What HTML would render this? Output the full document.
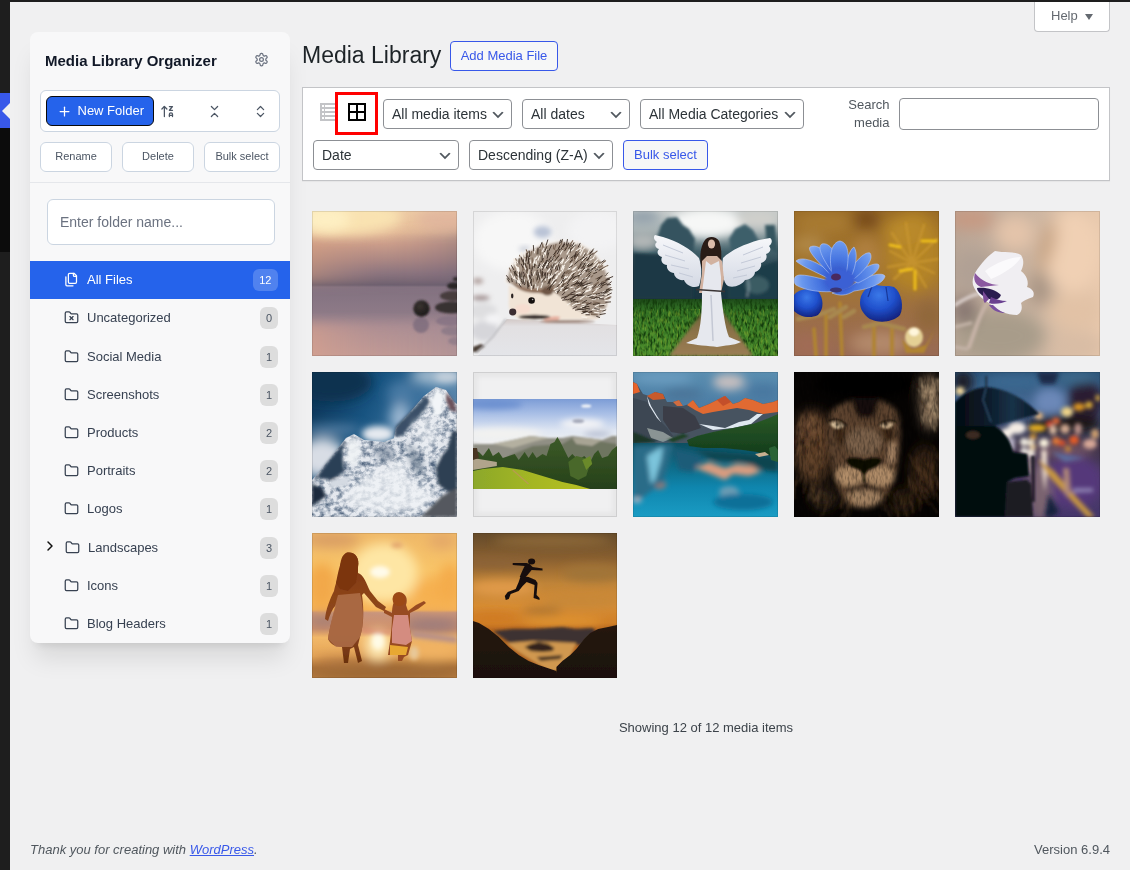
<!DOCTYPE html>
<html lang="en">
<head>
<meta charset="utf-8">
<title>Media Library</title>
<style>
*{box-sizing:border-box;margin:0;padding:0}
html,body{width:1130px;height:870px;overflow:hidden}
body{background:#f0f0f1;font-family:"Liberation Sans",Arial,sans-serif;font-size:13px;line-height:1.4;color:#3c434a;position:relative}
#page{position:absolute;left:0;top:0;width:1130px;height:870px;overflow:hidden;will-change:transform}
#adminbar{position:absolute;left:0;top:0;width:1130px;height:2px;background:#1e1e1e}
#menu{position:absolute;left:0;top:0;width:10px;height:870px;background:#1e1e1e}
#menu .cur{position:absolute;left:0;top:93px;width:10px;height:35px;background:#3858e9}
#menu .cur:after{content:"";position:absolute;right:0;top:50%;margin-top:-8px;border:8px solid transparent;border-right-color:#f0f0f1;border-left-width:0}
#menu .sub{position:absolute;left:0;top:128px;width:10px;height:124px;background:#0c0c0c}
#edgeL{position:absolute;left:10px;top:2px;width:1px;height:868px;background:#fbfbfb}
#edgeT{position:absolute;left:10px;top:2px;width:1120px;height:1px;background:#fbfbfb}

/* sidebar panel */
#panel{position:absolute;left:30px;top:32px;width:260px;height:611px;background:#f8f8f9;border-radius:8px;box-shadow:0 20px 25px -5px rgba(0,0,0,.1),0 8px 10px -6px rgba(0,0,0,.1)}
#panel h2{position:absolute;left:15px;top:19px;font-size:15px;font-weight:700;line-height:20px;color:#111827;white-space:nowrap}
#gear{position:absolute;left:224px;top:20px;width:15px;height:15px;color:#6b7280}
#tools{position:absolute;left:10px;top:58px;width:240px;height:42px;background:#fff;border:1px solid #cbd5e1;border-radius:6px}
#newf{position:absolute;left:5px;top:5px;width:108px;height:30px;background:#2563eb;border:1px solid #0a0a0a;border-radius:6px;color:#fff;font-size:13px;line-height:28px;white-space:nowrap}
#newf svg{position:absolute;left:9.9px;top:7px;width:15px;height:15px}
#newf span{position:absolute;left:30.5px;top:0}
.tb{position:absolute;top:13px;width:15px;height:15px;color:#4b5563}
.sb{position:absolute;top:110px;height:30px;background:#fff;border:1px solid #cbd5e1;border-radius:6px;font-size:11px;line-height:26px;text-align:center;color:#4b5563;white-space:nowrap}
#sep{position:absolute;left:0;top:150px;width:260px;height:1px;background:#e5e7eb}
#fname{position:absolute;left:17px;top:167px;width:228px;height:46px;background:#fff;border:1px solid #cbd5e1;border-radius:6px;font-size:14px;line-height:44px;padding-left:12px;color:#6b7280;white-space:nowrap}
.row{position:absolute;left:0;width:260px;height:38px;font-size:13px;color:#374151;white-space:nowrap}
.row.on{background:#2563eb;color:#fff}
.row svg.ic{position:absolute;left:33.5px;top:10.5px;width:15px;height:15px;color:#374151}
.row.on svg.ic{color:#fff}
.row .lb{position:absolute;left:57px;top:0;line-height:38px}
.row .bd{position:absolute;right:12px;top:8px;height:22px;min-width:18px;padding:0 6px;border-radius:6px;background:#dddddd;color:#4b5563;font-size:11px;line-height:22px;text-align:center}
.row.on .bd{background:rgba(255,255,255,.2);color:#fff;padding:0 6.500px}
.row svg.ch{position:absolute;left:11.5px;top:9.4px;width:16px;height:16px;color:#111}

/* main */
h1{position:absolute;left:302px;top:40px;font-size:23px;font-weight:400;line-height:30px;color:#1d2327;white-space:nowrap}
.btn{position:absolute;height:30px;border:1px solid #3858e9;border-radius:4px;background:#f6f7f7;color:#3858e9;font-size:13px;line-height:28px;text-align:center;white-space:nowrap}
#help{position:absolute;left:1034px;top:2px;width:76px;height:30px;background:#fff;border:1px solid #c3c4c7;border-top:none;border-radius:0 0 4px 4px;color:#646970;font-size:13px;line-height:26px;white-space:nowrap}
#help span{position:absolute;left:16px;top:1px}
#help i{position:absolute;left:50px;top:12px;width:0;height:0;border-left:4px solid transparent;border-right:4px solid transparent;border-top:6px solid #646970}
#filters{position:absolute;left:302px;top:87px;width:808px;height:94px;background:#fff;border:1px solid #c3c4c7;box-shadow:0 1px 1px rgba(0,0,0,.04)}
.sel{position:absolute;height:30px;border:1px solid #8c8f94;border-radius:4px;background:#fff;color:#2c3338;font-size:14px;line-height:28px;padding-left:8px;white-space:nowrap}
.sel svg{position:absolute;right:5px;top:7px;width:16px;height:16px}
#slabel{position:absolute;left:820.500px;top:96px;width:69px;text-align:right;font-size:13px;line-height:18.2px;color:#50575e}
#sinput{position:absolute;left:899px;top:98px;width:200px;height:32px;border:1px solid #8c8f94;border-radius:4px;background:#fff}
#vlist{position:absolute;left:320px;top:103px;width:18px;height:18px}
#vgrid{position:absolute;left:335px;top:92px;width:43px;height:43px;border:3px solid #f00}
#vgrid svg{position:absolute;left:10px;top:8px;width:18px;height:18px}
.th{position:absolute;width:145px;height:145px;background:#f0f0f1;outline:0}
.th svg{position:absolute;left:0;top:0;width:100%;height:145px;display:block;overflow:hidden}
.th:after{content:"";position:absolute;inset:0;box-shadow:inset 0 0 0 1px rgba(0,0,0,.1)}
#count{position:absolute;left:302px;top:719px;width:808px;text-align:center;font-size:13px;line-height:18px;color:#3c434a}
#ft1{position:absolute;left:30px;top:841px;font-size:13px;font-style:italic;line-height:18px;color:#50575e;white-space:nowrap}
#ft1 u{color:#3858e9}
#ft2{position:absolute;right:20px;top:841px;font-size:13px;line-height:18px;color:#50575e;white-space:nowrap}
</style>
</head>
<body>
<div id="page">
<div id="adminbar"></div>
<div id="menu"><div class="cur"></div><div class="sub"></div></div>

<div id="panel">
  <h2>Media Library Organizer</h2>
  <svg id="gear" viewBox="0 0 24 24" fill="none" stroke="currentColor" stroke-width="2" stroke-linecap="round" stroke-linejoin="round"><path d="M12.22 2h-.44a2 2 0 0 0-2 2v.18a2 2 0 0 1-1 1.73l-.43.25a2 2 0 0 1-2 0l-.15-.08a2 2 0 0 0-2.73.73l-.22.38a2 2 0 0 0 .73 2.73l.15.1a2 2 0 0 1 1 1.72v.51a2 2 0 0 1-1 1.74l-.15.09a2 2 0 0 0-.73 2.73l.22.38a2 2 0 0 0 2.73.73l.15-.08a2 2 0 0 1 2 0l.43.25a2 2 0 0 1 1 1.73V20a2 2 0 0 0 2 2h.44a2 2 0 0 0 2-2v-.18a2 2 0 0 1 1-1.73l.43-.25a2 2 0 0 1 2 0l.15.08a2 2 0 0 0 2.73-.73l.22-.39a2 2 0 0 0-.73-2.73l-.15-.08a2 2 0 0 1-1-1.74v-.5a2 2 0 0 1 1-1.74l.15-.09a2 2 0 0 0 .73-2.73l-.22-.38a2 2 0 0 0-2.73-.73l-.15.08a2 2 0 0 1-2 0l-.43-.25a2 2 0 0 1-1-1.73V4a2 2 0 0 0-2-2z"/><circle cx="12" cy="12" r="3"/></svg>
  <div id="tools">
    <div id="newf"><svg viewBox="0 0 24 24" fill="none" stroke="#fff" stroke-width="2" stroke-linecap="round" stroke-linejoin="round"><path d="M5 12h14"/><path d="M12 5v14"/></svg><span>New Folder</span></div>
    <svg class="tb" style="left:119px" viewBox="0 0 24 24" fill="none" stroke="currentColor" stroke-width="2" stroke-linecap="round" stroke-linejoin="round"><path d="m3 8 4-4 4 4"/><path d="M7 4v16"/><path d="M15 4h5l-5 6h5"/><path d="M15 20v-3.500a2.500 2.500 0 0 1 5 0V20"/><path d="M20 18h-5"/></svg>
    <svg class="tb" style="left:165.500px" viewBox="0 0 24 24" fill="none" stroke="currentColor" stroke-width="2" stroke-linecap="round" stroke-linejoin="round"><path d="m7 20 5-5 5 5"/><path d="m7 4 5 5 5-5"/></svg>
    <svg class="tb" style="left:211.500px" viewBox="0 0 24 24" fill="none" stroke="currentColor" stroke-width="2" stroke-linecap="round" stroke-linejoin="round"><path d="m7 15 5 5 5-5"/><path d="m7 9 5-5 5 5"/></svg>
  </div>
  <div class="sb" style="left:10px;width:72px">Rename</div>
  <div class="sb" style="left:92px;width:72px">Delete</div>
  <div class="sb" style="left:174px;width:76px">Bulk select</div>
  <div id="sep"></div>
  <div id="fname">Enter folder name...</div>
  <div class="row on" style="top:229px"><svg class="ic" viewBox="0 0 24 24" fill="none" stroke="currentColor" stroke-width="2" stroke-linecap="round" stroke-linejoin="round"><path d="M20 7h-3a2 2 0 0 1-2-2V2"/><path d="M9 18a2 2 0 0 1-2-2V4a2 2 0 0 1 2-2h7l4 4v10a2 2 0 0 1-2 2Z"/><path d="M3 7.600v12.800A1.600 1.600 0 0 0 4.600 22h9.800"/></svg><span class="lb">All Files</span><span class="bd">12</span></div>
  <div class="row" style="top:267px"><svg class="ic" viewBox="0 0 24 24" fill="none" stroke="currentColor" stroke-width="2" stroke-linecap="round" stroke-linejoin="round"><path d="M4 20h16a2 2 0 0 0 2-2V8a2 2 0 0 0-2-2h-7.930a2 2 0 0 1-1.660-.900l-.820-1.200A2 2 0 0 0 7.930 3H4a2 2 0 0 0-2 2v13c0 1.100.900 2 2 2Z"/><path d="m9.500 10.500 5 5"/><path d="m14.500 10.500-5 5"/></svg><span class="lb">Uncategorized</span><span class="bd">0</span></div>
  <div class="row" style="top:306px"><svg class="ic" viewBox="0 0 24 24" fill="none" stroke="currentColor" stroke-width="2" stroke-linecap="round" stroke-linejoin="round"><path d="M20 20a2 2 0 0 0 2-2V8a2 2 0 0 0-2-2h-7.900a2 2 0 0 1-1.690-.900L9.600 3.900A2 2 0 0 0 7.930 3H4a2 2 0 0 0-2 2v13a2 2 0 0 0 2 2Z"/></svg><span class="lb">Social Media</span><span class="bd">1</span></div>
  <div class="row" style="top:344px"><svg class="ic" viewBox="0 0 24 24" fill="none" stroke="currentColor" stroke-width="2" stroke-linecap="round" stroke-linejoin="round"><path d="M20 20a2 2 0 0 0 2-2V8a2 2 0 0 0-2-2h-7.900a2 2 0 0 1-1.690-.900L9.600 3.900A2 2 0 0 0 7.930 3H4a2 2 0 0 0-2 2v13a2 2 0 0 0 2 2Z"/></svg><span class="lb">Screenshots</span><span class="bd">1</span></div>
  <div class="row" style="top:382px"><svg class="ic" viewBox="0 0 24 24" fill="none" stroke="currentColor" stroke-width="2" stroke-linecap="round" stroke-linejoin="round"><path d="M20 20a2 2 0 0 0 2-2V8a2 2 0 0 0-2-2h-7.900a2 2 0 0 1-1.690-.900L9.600 3.900A2 2 0 0 0 7.930 3H4a2 2 0 0 0-2 2v13a2 2 0 0 0 2 2Z"/></svg><span class="lb">Products</span><span class="bd">2</span></div>
  <div class="row" style="top:420px"><svg class="ic" viewBox="0 0 24 24" fill="none" stroke="currentColor" stroke-width="2" stroke-linecap="round" stroke-linejoin="round"><path d="M20 20a2 2 0 0 0 2-2V8a2 2 0 0 0-2-2h-7.900a2 2 0 0 1-1.690-.900L9.600 3.900A2 2 0 0 0 7.930 3H4a2 2 0 0 0-2 2v13a2 2 0 0 0 2 2Z"/></svg><span class="lb">Portraits</span><span class="bd">2</span></div>
  <div class="row" style="top:458px"><svg class="ic" viewBox="0 0 24 24" fill="none" stroke="currentColor" stroke-width="2" stroke-linecap="round" stroke-linejoin="round"><path d="M20 20a2 2 0 0 0 2-2V8a2 2 0 0 0-2-2h-7.900a2 2 0 0 1-1.690-.900L9.600 3.900A2 2 0 0 0 7.930 3H4a2 2 0 0 0-2 2v13a2 2 0 0 0 2 2Z"/></svg><span class="lb">Logos</span><span class="bd">1</span></div>
  <div class="row" style="top:497px"><svg class="ch" viewBox="0 0 24 24" fill="none" stroke="currentColor" stroke-width="2.2" stroke-linecap="round" stroke-linejoin="round"><path d="m9 18 6-6-6-6"/></svg><svg class="ic" style="left:34.5px" viewBox="0 0 24 24" fill="none" stroke="currentColor" stroke-width="2" stroke-linecap="round" stroke-linejoin="round"><path d="M20 20a2 2 0 0 0 2-2V8a2 2 0 0 0-2-2h-7.900a2 2 0 0 1-1.690-.900L9.600 3.900A2 2 0 0 0 7.930 3H4a2 2 0 0 0-2 2v13a2 2 0 0 0 2 2Z"/></svg><span class="lb" style="left:58px">Landscapes</span><span class="bd">3</span></div>
  <div class="row" style="top:535px"><svg class="ic" viewBox="0 0 24 24" fill="none" stroke="currentColor" stroke-width="2" stroke-linecap="round" stroke-linejoin="round"><path d="M20 20a2 2 0 0 0 2-2V8a2 2 0 0 0-2-2h-7.900a2 2 0 0 1-1.690-.900L9.600 3.900A2 2 0 0 0 7.930 3H4a2 2 0 0 0-2 2v13a2 2 0 0 0 2 2Z"/></svg><span class="lb">Icons</span><span class="bd">1</span></div>
  <div class="row" style="top:573px"><svg class="ic" viewBox="0 0 24 24" fill="none" stroke="currentColor" stroke-width="2" stroke-linecap="round" stroke-linejoin="round"><path d="M20 20a2 2 0 0 0 2-2V8a2 2 0 0 0-2-2h-7.900a2 2 0 0 1-1.690-.900L9.600 3.900A2 2 0 0 0 7.930 3H4a2 2 0 0 0-2 2v13a2 2 0 0 0 2 2Z"/></svg><span class="lb">Blog Headers</span><span class="bd">1</span></div>
</div>

<h1>Media Library</h1>
<div class="btn" style="left:450px;top:41px;width:108px">Add Media File</div>
<div id="help"><span>Help</span><i></i></div>

<div id="filters"></div>
<svg id="vlist" viewBox="0 0 18 18"><rect width="18" height="18" fill="#c3c4c7"/><g fill="#fff"><rect x="2" y="2" width="2" height="2"/><rect x="5" y="2" width="11" height="2"/><rect x="2" y="6" width="2" height="2"/><rect x="5" y="6" width="11" height="2"/><rect x="2" y="10" width="2" height="2"/><rect x="5" y="10" width="11" height="2"/><rect x="2" y="14" width="2" height="2"/><rect x="5" y="14" width="11" height="2"/></g></svg>
<div id="vgrid"><svg viewBox="0 0 18 18" fill="none" stroke="#000" stroke-width="2"><rect x="1" y="1" width="16" height="16"/><path d="M9 1v16M1 9h16"/></svg></div>
<div class="sel" style="left:383px;top:99px;width:129px">All media items<svg viewBox="0 0 20 20"><path d="M5 6l5 5 5-5 2 1-7 7-7-7 2-1z" fill="#50575e"/></svg></div>
<div class="sel" style="left:522px;top:99px;width:108px">All dates<svg viewBox="0 0 20 20"><path d="M5 6l5 5 5-5 2 1-7 7-7-7 2-1z" fill="#50575e"/></svg></div>
<div class="sel" style="left:640px;top:99px;width:164px">All Media Categories<svg viewBox="0 0 20 20"><path d="M5 6l5 5 5-5 2 1-7 7-7-7 2-1z" fill="#50575e"/></svg></div>
<div id="slabel">Search media</div>
<div id="sinput"></div>
<div class="sel" style="left:313px;top:140px;width:146px">Date<svg viewBox="0 0 20 20"><path d="M5 6l5 5 5-5 2 1-7 7-7-7 2-1z" fill="#50575e"/></svg></div>
<div class="sel" style="left:469px;top:140px;width:144px">Descending (Z-A)<svg viewBox="0 0 20 20"><path d="M5 6l5 5 5-5 2 1-7 7-7-7 2-1z" fill="#50575e"/></svg></div>
<div class="btn" style="left:623px;top:140px;width:85px">Bulk select</div>

<div class="th" style="left:312px;top:211px;width:145px"><svg viewBox="0 0 145 145" preserveAspectRatio="none">
<defs>
<linearGradient id="st_a" x1="0" y1="0" x2="0" y2="1">
<stop offset="0" stop-color="#ecc9a4"/><stop offset=".15" stop-color="#e6bc98"/><stop offset=".23" stop-color="#cfa08a"/><stop offset=".34" stop-color="#a98682"/><stop offset=".43" stop-color="#84707c"/><stop offset=".51" stop-color="#695d6d"/><stop offset=".525" stop-color="#827180"/><stop offset=".7" stop-color="#8d7a87"/><stop offset=".8" stop-color="#a58a92"/><stop offset="1" stop-color="#bf9a96"/>
</linearGradient>
<linearGradient id="st_c" x1="0" y1="0" x2="1" y2="0"><stop offset="0" stop-color="#dda27c" stop-opacity=".6"/><stop offset=".5" stop-color="#b08888" stop-opacity=".15"/><stop offset="1" stop-color="#6a5e74" stop-opacity=".5"/></linearGradient>
<linearGradient id="st_d" x1="0" y1="0" x2="1" y2="0"><stop offset="0" stop-color="#e0a48c" stop-opacity=".75"/><stop offset=".45" stop-color="#c89c94" stop-opacity=".3"/><stop offset="1" stop-color="#9c8a98" stop-opacity=".5"/></linearGradient>
<filter id="st_f" x="-50%" y="-50%" width="200%" height="200%"><feGaussianBlur stdDeviation="1"/></filter>
<filter id="st_g" x="-50%" y="-50%" width="200%" height="200%"><feGaussianBlur stdDeviation="6"/></filter>
<radialGradient id="st_s" cx=".4" cy=".35" r=".7"><stop offset="0" stop-color="#3a3430"/><stop offset="1" stop-color="#181617"/></radialGradient>
</defs>
<rect width="145" height="145" fill="url(#st_a)"/>
<path d="M-20 30L165 18V72H-20Z" fill="url(#st_c)" filter="url(#st_g)"/>
<rect x="-20" y="112" width="185" height="50" fill="url(#st_d)" filter="url(#st_g)"/>
<ellipse cx="30" cy="6" rx="60" ry="18" fill="#fbe6b4" opacity=".9" filter="url(#st_g)"/>
<ellipse cx="14" cy="8" rx="24" ry="12" fill="#fff3c8" opacity=".8" filter="url(#st_g)"/>
<ellipse cx="135" cy="8" rx="30" ry="12" fill="#dcae9c" opacity=".6" filter="url(#st_g)"/>
<g filter="url(#st_f)">
<ellipse cx="109" cy="114" rx="8" ry="8" fill="#7c6c7c" opacity=".8"/>
<ellipse cx="138" cy="110" rx="14" ry="5" fill="#847282" opacity=".8"/>
<ellipse cx="141" cy="120" rx="12" ry="4.500" fill="#8a7886" opacity=".8"/>
<ellipse cx="144" cy="130" rx="8" ry="4" fill="#8d7a88" opacity=".8"/>
</g>
<g filter="url(#st_f)">
<ellipse cx="144" cy="68" rx="3" ry="2" fill="#2e2a2c"/>
<ellipse cx="142" cy="75" rx="7" ry="3.500" fill="#2a2628"/>
<ellipse cx="141" cy="85" rx="13" ry="5" fill="#463c3e"/>
<ellipse cx="139" cy="96.500" rx="16" ry="6" fill="#383032"/>
</g>
<circle cx="109.500" cy="97.500" r="8.200" fill="url(#st_s)" filter="url(#st_f)"/>
</svg></div>
<div class="th" style="left:473px;top:211px;width:144px"><svg viewBox="0 0 145 145" preserveAspectRatio="none">
<defs>
<filter id="hh_b" x="-50%" y="-50%" width="200%" height="200%"><feGaussianBlur stdDeviation="5"/></filter>
<filter id="hh_c" x="-50%" y="-50%" width="200%" height="200%"><feGaussianBlur stdDeviation="1.2"/></filter>
<filter id="hh_d" x="-50%" y="-50%" width="200%" height="200%"><feGaussianBlur stdDeviation="2.5"/></filter>
<filter id="hh_e" x="-50%" y="-50%" width="200%" height="200%"><feGaussianBlur stdDeviation=".35"/></filter>
<linearGradient id="hh_s" x1="0" y1="0" x2="0" y2="1"><stop offset="0" stop-color="#d2c8c6"/><stop offset=".2" stop-color="#e2e0e2"/><stop offset="1" stop-color="#e4e5e9"/></linearGradient>
</defs>
<rect width="145" height="145" fill="#eeeeef"/>
<ellipse cx="40" cy="30" rx="40" ry="30" fill="#f7f7f7" filter="url(#hh_b)"/>
<ellipse cx="70" cy="21" rx="9" ry="6" fill="#b9c3d6" filter="url(#hh_d)"/>
<ellipse cx="52" cy="38" rx="6" ry="3" fill="#cfd3dc" filter="url(#hh_d)"/>
<ellipse cx="125" cy="20" rx="30" ry="20" fill="#f3f3f4" filter="url(#hh_b)"/>
<g filter="url(#hh_d)">
<ellipse cx="10" cy="100" rx="14" ry="8" fill="#dedee0"/>
<ellipse cx="8" cy="87" rx="9" ry="2" fill="#8a7474"/>
<ellipse cx="5" cy="70" rx="5" ry="2.5" fill="#a08c88"/>
<ellipse cx="12" cy="120" rx="14" ry="10" fill="#d6d6da"/>
<ellipse cx="20" cy="108" rx="8" ry="5" fill="#f4f4f6"/>
</g>
<path d="M34 108L145 114V145H5L20 125Z" fill="url(#hh_s)"/>
<path d="M0 136L8 133L12 135L4 141L0 141Z" fill="#4a3c34" filter="url(#hh_c)"/>
<path d="M33 108L20 126L3 142" stroke="#b8b8bc" stroke-width="1.5" fill="none" filter="url(#hh_c)"/>
<path d="M34 70L37 60L44 50L54 42L68 35L88 31L106 33L120 41L130 53L136 67L137 82L134 96L126 106L112 108L102 100L92 92L84 84L74 78L60 80L44 76Z" fill="#f4f0ec" stroke="#f4f0ec" stroke-width="5" stroke-linejoin="round" filter="url(#hh_c)"/>
<path d="M34 70L37 60L44 50L54 42L68 35L88 31L106 33L120 41L130 53L136 67L137 82L134 96L126 106L112 108L102 100L92 92L84 84L74 78L60 80L44 76Z" fill="#a8988a" filter="url(#hh_c)"/>
<g filter="url(#hh_c)">
<path d="M36 74C44 78 58 80 72 78C82 80 92 88 100 96C110 102 120 104 128 108L50 109C40 106 35 100 36 90Z" fill="#f1e4d6"/>
<path d="M40 72C50 78 66 80 82 76C80 82 74 84 66 82C54 82 46 80 40 72Z" fill="#8a6a54"/>
<ellipse cx="75" cy="80" rx="6" ry="4.5" fill="#6e5444"/>
<ellipse cx="62" cy="106" rx="16" ry="2.2" fill="#2c2420"/>
<path d="M70 110C74 106 84 104 88 106C86 110 80 112 74 112Z" fill="#e6b0a0"/>
<ellipse cx="95" cy="110.5" rx="28" ry="1.5" fill="#a08a80"/>
<ellipse cx="50" cy="98" rx="8" ry="5" fill="#f6ddd0"/>
</g>
<g fill="none" stroke-linecap="round" filter="url(#hh_e)">
<path d="M85.0 82.3l2.9 -2.5M114.3 60.8l3.8 -1.7M120.0 48.5l3.0 -4.2M92.9 38.8l2.2 -5.2M130.7 56.9l5.1 -2.5M97.0 34.6l3.4 -4.9M103.2 44.3l3.1 -4.5M99.2 64.6l3.9 -3.1M120.0 80.6l3.6 -0.8M122.8 73.9l3.5 -2.2M82.0 38.4l1.6 -5.2M82.4 54.0l1.1 -4.7M100.2 71.4l4.4 -1.9M119.2 102.0l3.9 -0.6M74.5 77.2l3.1 -5.1M111.9 91.8l4.2 -0.0M102.6 74.7l3.5 -2.2M51.5 58.8l-1.5 -3.4M90.5 69.6l4.2 -2.2M133.1 87.3l5.8 -1.4M94.0 62.4l3.6 -2.8M134.8 88.2l3.1 -1.3M63.5 54.0l0.2 -5.8M122.0 74.1l4.2 -3.2M120.9 82.7l5.4 -0.4M83.1 46.1l0.5 -5.8M72.3 71.3l1.6 -3.5M88.8 40.4l1.8 -2.4M124.3 52.9l3.8 -1.9M52.9 72.6l-0.5 -3.4M56.1 74.3l-0.3 -3.0M58.2 44.4l0.7 -3.9M104.5 86.1l3.5 -2.3M120.8 78.1l4.3 -3.1M56.9 75.3l0.4 -4.0M105.8 90.2l4.4 -0.5M129.6 71.1l3.9 -1.7M62.9 54.6l-1.2 -5.6M128.8 53.2l4.7 -3.4M82.0 44.9l1.4 -5.6M69.0 66.7l0.3 -5.6M57.0 50.9l0.1 -3.6M102.4 92.2l4.4 -1.1M87.8 49.7l1.7 -2.8M48.9 48.9l-2.0 -4.7M44.9 69.6l-1.9 -3.6M90.3 79.2l4.5 -3.2M66.0 55.4l1.9 -5.2M92.4 62.5l3.6 -3.3M55.4 43.1l-1.8 -4.4M105.6 62.4l3.4 -2.5M89.7 67.6l2.3 -3.2M102.3 79.1l4.6 -3.6M64.1 70.2l-0.6 -3.6M119.1 93.0l4.2 -0.1M121.0 91.0l3.3 0.4M55.0 59.8l-0.8 -4.9M65.4 72.0l1.9 -3.1M99.0 64.6l3.7 -3.1M84.0 47.2l3.1 -3.9M116.6 68.2l4.0 -3.6M70.2 36.2l-0.6 -4.0M50.0 59.9l0.3 -4.8M106.3 66.2l2.0 -2.7M103.9 48.1l2.0 -2.8M57.7 62.5l-0.6 -5.4M101.4 79.1l3.5 -1.3M112.4 68.0l2.5 -3.4M74.3 51.4l1.3 -3.0M122.7 57.4l3.7 -2.4M77.6 78.6l3.8 -4.5M92.5 73.2l2.3 -2.6M60.0 51.4l-0.5 -4.5M92.2 37.8l2.9 -2.7M44.8 52.6l-1.8 -4.8M95.0 84.2l4.4 -1.9M102.0 49.3l2.4 -2.9M105.6 56.5l3.3 -3.0M67.7 44.1l-0.2 -5.5M105.4 93.4l5.4 -0.4M64.2 43.2l1.2 -5.1M98.5 38.3l2.1 -2.4M114.6 92.4l4.7 0.3M60.7 70.8l0.2 -3.1M113.9 73.5l5.4 -2.3M38.0 60.1l-1.4 -3.0M123.7 67.9l3.6 -1.7M101.9 46.5l3.4 -3.1M80.6 71.4l3.8 -2.7M54.0 66.9l-1.0 -4.2M64.1 76.5l0.2 -3.3M98.2 51.4l2.4 -5.1M121.1 43.1l3.8 -3.0M70.8 55.1l0.0 -4.8M56.3 43.6l0.4 -3.2M127.6 76.2l4.2 -2.0M125.3 57.7l5.1 -3.0M58.9 58.0l0.6 -3.5M110.1 100.5l4.7 -0.1M80.1 69.5l3.0 -3.0M83.2 60.6l2.0 -3.5M127.4 67.6l2.5 -2.3M134.4 78.7l4.7 -2.2M85.4 39.5l2.5 -5.3M81.0 37.7l0.2 -3.5M95.8 78.3l4.4 -1.9M71.6 37.6l-0.2 -4.9M76.3 57.0l2.6 -3.1M88.6 75.7l2.7 -5.3M70.6 53.5l-0.0 -4.8M119.2 103.4l5.9 0.4M88.7 75.5l4.1 -3.6M75.1 66.8l1.8 -4.4M116.5 101.6l3.2 -0.7M53.3 46.6l1.4 -5.7M103.5 77.7l5.6 -1.8M123.8 91.3l4.3 0.7M95.8 62.7l3.3 -2.3M88.8 33.4l1.2 -3.7M92.4 79.2l2.9 -1.8" stroke="#7c6858" stroke-width="1.1"/>
<path d="M79.8 73.9l3.5 -2.7M94.6 43.1l2.6 -4.2M101.9 78.5l2.2 -2.1M81.0 64.1l3.2 -3.3M110.5 38.7l2.4 -2.4M94.1 47.9l2.5 -3.3M111.1 101.8l5.1 0.6M125.0 75.0l3.9 -1.3M110.1 59.9l4.1 -2.4M96.1 67.4l3.0 -4.2M79.6 50.6l0.8 -4.2M84.3 53.9l3.9 -4.5M108.6 42.7l2.0 -3.5M87.2 78.4l3.6 -2.1M132.6 87.2l3.9 -2.0M130.1 58.9l4.9 -2.8M133.9 66.0l3.4 -1.3M124.1 56.6l2.6 -3.4M46.4 70.4l-1.0 -5.4M87.9 51.8l3.1 -3.8M87.7 75.0l2.6 -3.8M91.9 68.3l2.5 -2.0M65.4 57.1l0.8 -3.2M43.5 69.9l-2.0 -3.0M42.7 69.5l-1.1 -4.4M134.7 65.9l3.8 -1.1M86.7 63.3l1.9 -2.4M128.3 93.7l5.6 -0.0M67.6 66.4l-0.4 -4.0M100.2 94.4l4.2 -2.4M47.6 66.7l-2.2 -3.9M77.2 67.2l2.7 -2.6M116.3 79.2l3.3 -1.8M92.1 67.8l3.0 -2.5M102.8 34.7l2.2 -4.7M72.6 44.0l1.5 -5.2M86.7 72.6l4.2 -4.2M112.0 81.2l3.1 -2.0M73.4 55.7l3.0 -4.0M100.4 71.0l4.7 -2.7M115.4 42.7l1.9 -3.9M65.4 49.3l1.7 -4.2M123.1 95.4l3.5 -1.6M40.7 67.4l-2.6 -5.2M64.3 53.5l-0.7 -3.9M121.3 81.6l3.2 -2.6M89.4 52.5l1.8 -3.8M74.8 34.0l2.2 -3.7M101.6 36.7l2.1 -4.0M90.3 56.9l1.9 -2.8M108.7 96.5l5.5 -2.0M95.1 93.9l3.0 -2.0M45.7 59.7l-0.8 -3.4M103.8 39.9l3.9 -2.8M122.2 98.1l4.3 -0.7M109.8 101.8l4.8 0.6M63.5 76.7l-0.3 -3.4M85.3 60.5l1.2 -4.9M112.1 74.5l3.2 -0.7M109.8 53.7l4.9 -2.6M108.2 44.1l1.7 -3.3M117.0 58.5l4.8 -2.9M100.4 35.4l3.4 -2.7M105.3 70.7l3.4 -1.0M55.9 64.1l0.7 -5.3M56.0 68.1l-1.2 -4.6M46.1 53.5l-2.1 -3.4M106.4 98.9l5.7 -0.2M52.4 45.6l-0.5 -3.9M69.7 40.6l1.9 -3.6M40.2 56.0l-1.4 -3.2M81.6 78.5l3.6 -2.0M89.8 60.3l1.9 -4.0M66.7 56.4l1.7 -3.5M125.3 99.3l3.5 -1.4M117.6 60.2l3.3 -1.7M108.5 37.7l1.3 -3.6M122.3 51.3l3.5 -3.4M128.2 53.4l2.1 -2.8M99.8 59.0l2.7 -2.4M127.6 98.2l4.5 0.0M125.7 86.4l4.9 -2.3M51.6 50.9l-0.1 -3.2M126.4 87.7l4.5 -2.2M97.1 57.3l2.8 -5.3M99.4 62.8l3.6 -2.2M60.9 64.2l1.5 -3.6M81.6 57.7l1.7 -3.6M101.5 85.5l3.2 -0.2M53.0 58.3l-1.5 -3.9M120.0 88.2l3.5 -0.3M83.8 81.6l5.3 -2.5M77.2 67.1l1.6 -4.0M95.8 58.2l2.5 -4.1M121.5 54.9l3.9 -3.9M100.6 32.7l2.1 -2.4M132.8 89.7l3.0 -0.4M77.5 59.0l2.9 -5.0M105.9 59.8l2.8 -1.7M68.5 76.5l1.5 -3.9M51.9 71.9l-0.4 -3.3M131.6 84.5l5.5 -2.0M110.0 49.7l1.7 -2.5M57.9 52.0l-0.6 -3.3M124.0 78.0l4.9 -1.8M116.6 47.1l2.9 -3.0M88.0 43.1l1.9 -3.6M75.9 67.8l0.7 -4.4M131.8 98.4l3.0 0.7M121.3 84.5l4.5 -1.3M74.8 55.5l0.7 -3.0M58.8 76.0l0.2 -4.0M50.3 47.0l-1.1 -3.8M104.2 92.8l3.2 -0.7M43.5 71.2l-1.8 -4.4M92.5 52.1l4.2 -4.2M111.0 45.4l1.4 -3.4M58.7 78.7l-0.3 -4.4M61.8 42.0l0.8 -3.6M93.2 79.8l2.6 -1.9M83.0 80.6l3.5 -1.6M117.8 48.9l4.0 -2.0M83.9 67.5l2.5 -4.9M63.4 48.0l1.2 -2.8M46.5 73.2l-2.5 -4.5M106.4 63.9l2.5 -3.5M111.9 61.0l4.3 -2.7M43.2 52.9l-2.6 -5.0M75.1 60.7l2.3 -3.0M107.9 64.8l3.1 -3.0M64.7 79.2l0.8 -3.8M109.6 105.9l5.0 0.7M122.1 60.1l4.4 -2.6M112.1 75.5l4.0 -3.1M92.4 71.3l2.5 -2.4M128.3 82.4l4.9 -2.3M69.4 72.1l0.0 -4.1M120.1 98.5l4.9 -1.5M98.2 40.3l3.1 -2.5M130.7 83.5l3.6 -2.0M70.1 46.8l1.1 -2.9M106.7 42.5l2.4 -4.4M81.6 70.0l2.6 -5.0M72.9 69.3l1.7 -4.3M89.8 70.2l3.3 -4.5M46.3 59.9l-0.5 -3.3M133.3 63.7l4.6 -1.4M79.2 72.6l2.2 -4.2M103.7 79.5l4.3 -2.8M49.8 69.0l-1.2 -5.2M71.9 35.1l-0.7 -5.5M88.9 58.8l1.6 -4.4M44.5 59.4l-0.6 -4.1M61.3 52.0l1.3 -5.2M45.8 61.1l-0.8 -3.3M60.8 54.5l0.5 -3.5M100.1 33.4l2.4 -2.9M73.7 53.6l2.0 -3.9M81.7 52.7l2.4 -2.7M57.4 73.3l-0.5 -3.5M113.5 55.6l3.6 -3.6M101.3 58.7l2.6 -3.1M68.8 56.9l2.4 -4.8M113.5 46.5l3.5 -2.1M52.2 51.8l-0.6 -3.8M117.1 77.4l3.2 -3.0M113.4 81.0l4.9 -2.1M47.4 71.5l-1.7 -4.2M114.6 76.5l4.0 -1.4M48.1 47.0l0.6 -5.7M44.0 56.9l-2.2 -4.4M72.6 57.5l-0.1 -3.2M72.0 42.5l-0.2 -3.0M43.3 52.8l-1.7 -5.2M62.6 52.4l-0.6 -3.0M116.4 73.6l3.6 -1.9M121.9 101.3l5.0 0.6M97.8 77.1l3.0 -1.0M48.1 74.2l-2.8 -4.4M108.0 88.0l4.7 -3.4M121.2 46.7l2.7 -3.5M114.4 69.8l3.5 -3.0M110.4 68.0l5.7 -1.9M104.3 82.5l3.9 -1.2M109.6 93.8l3.5 -0.8M56.9 46.6l-0.9 -4.2M130.4 83.5l4.6 -3.2M97.3 57.8l1.9 -5.1M114.7 85.5l5.4 -1.4M103.6 49.3l1.9 -3.4" stroke="#f6f0e8" stroke-width="1.1"/>
<path d="M107.9 53.9l2.2 -3.2M73.7 34.0l1.6 -5.1M117.7 42.6l3.2 -3.0M53.4 50.1l1.3 -5.2M100.6 36.2l2.9 -2.3M115.0 55.0l2.1 -2.4M135.5 67.7l5.2 -2.1M127.0 77.5l3.0 -1.4M107.5 49.1l3.9 -2.7M97.6 51.0l2.9 -2.1M59.6 64.5l-0.9 -3.4M102.3 84.7l3.2 -1.2M129.6 82.1l5.4 -1.9M126.8 59.5l3.4 -1.9M123.4 86.3l3.8 0.2M107.9 74.8l4.2 -3.3M44.9 65.3l-3.4 -4.3M135.4 84.1l4.0 -2.0M114.5 68.0l3.4 -4.2M118.0 42.2l3.3 -4.3M134.0 68.4l3.2 -0.4M78.0 58.8l1.6 -4.3M121.5 62.6l3.1 -1.2M90.7 70.2l2.5 -2.4M74.6 44.0l0.2 -4.5M126.8 85.0l5.3 -0.4M98.6 47.0l4.0 -3.0M100.6 85.5l5.8 -1.3M97.7 88.6l3.6 -2.2M76.3 71.2l2.2 -3.4M102.1 74.0l3.8 -3.5M113.0 60.0l4.8 -2.0M96.4 37.4l2.5 -3.6M43.7 64.3l-1.0 -4.3M92.1 76.5l4.4 -2.9M130.7 100.1l3.0 -1.2M76.8 79.1l1.7 -4.3M90.6 79.8l3.3 -3.0M98.6 91.0l3.7 -2.1M119.1 58.3l5.1 -3.0M90.3 89.2l4.2 -0.6M61.1 39.7l-0.3 -5.2M57.3 57.7l-0.4 -4.1M111.1 101.7l4.6 -1.6M89.1 87.1l5.4 -2.0M76.3 40.0l2.6 -5.4M76.7 51.9l2.0 -2.5M53.9 47.3l0.4 -4.8M50.3 51.0l-1.9 -4.9M82.7 49.4l3.7 -4.4M102.3 47.5l1.4 -4.2M117.6 86.5l3.4 -0.7M108.7 57.5l2.7 -1.9M117.9 45.0l3.0 -2.5M91.9 87.4l4.6 -3.0M95.2 35.4l1.0 -3.3M101.2 90.9l4.1 -0.3M102.6 77.9l2.6 -3.0M69.7 66.0l0.2 -5.9M129.4 72.6l4.4 -1.7M119.9 77.3l4.3 -3.4M50.4 72.9l-1.6 -2.7M102.4 53.2l3.9 -3.5M59.0 74.6l-0.4 -4.9M56.3 53.1l-0.4 -3.7M103.2 99.1l5.3 -0.9M43.6 72.1l-0.3 -3.0M73.7 57.2l1.2 -2.9M133.2 64.5l2.6 -2.6M55.2 52.7l1.2 -4.9M88.4 31.7l1.7 -3.4M85.0 42.8l2.2 -4.4M108.6 75.0l3.4 -0.9M77.8 64.2l1.6 -5.2M129.8 74.6l5.0 -1.9M75.2 57.9l0.9 -5.8M73.2 52.4l0.7 -3.1M110.7 46.8l2.5 -3.9M70.0 55.6l2.7 -4.0M53.7 56.5l-1.4 -4.4M106.0 57.8l1.8 -2.4M58.9 60.2l1.6 -4.9M109.6 102.4l3.7 -1.4M87.1 32.5l1.1 -3.5M76.6 72.6l1.4 -4.9M109.8 82.6l2.9 -2.2M108.4 61.2l4.0 -3.9M62.1 56.3l-0.4 -3.1M99.3 74.4l5.4 -2.3M99.6 35.4l2.0 -3.7M72.2 54.9l1.1 -3.7M74.3 67.0l0.9 -4.9M107.2 73.4l2.8 -1.2M84.5 76.0l2.7 -2.9M128.1 74.4l4.2 -2.7M133.7 91.3l4.8 -0.4M75.7 50.6l3.0 -4.8M106.5 84.3l5.5 -0.3M98.4 68.2l3.2 -2.6M112.4 71.8l2.8 -2.5M49.6 70.1l-1.5 -2.8M42.4 65.0l-0.8 -4.4M106.3 72.8l3.2 -1.2M57.7 68.0l-1.1 -3.8M92.3 39.8l2.1 -3.2M83.0 58.0l1.0 -3.0M125.4 67.7l4.6 -2.9M121.7 87.4l2.7 -1.4M68.9 50.9l1.9 -3.5M90.1 83.8l2.3 -2.4M68.5 63.3l-0.4 -4.5M54.2 61.5l0.2 -3.5M65.4 43.0l0.1 -6.0M105.9 65.2l3.6 -2.3M55.3 77.3l-0.2 -4.5M46.7 66.4l0.3 -5.2M121.2 93.4l5.9 -0.9M114.8 73.0l5.3 -1.2M60.6 77.5l0.8 -3.4M111.0 57.5l2.8 -3.2M55.9 75.5l-1.3 -5.5M124.0 83.5l5.5 -1.9M111.8 77.3l2.8 -1.5M95.0 72.8l3.2 -4.7M70.0 58.7l2.0 -4.6M110.4 91.6l3.9 -2.1M124.6 105.5l2.9 0.9M88.9 71.8l2.5 -4.7M85.8 38.2l1.5 -3.1M86.3 52.1l2.4 -2.9M79.7 73.8l3.1 -4.6M74.7 78.2l4.3 -4.0M100.7 97.5l3.8 -1.9M73.4 52.5l1.7 -3.4M36.8 71.3l-2.2 -3.6M40.9 58.5l-2.1 -3.9M64.7 68.8l1.0 -5.2M71.6 64.7l1.0 -3.2M103.3 72.9l2.2 -2.6M134.9 73.9l3.6 -0.3M48.3 76.0l-2.1 -3.5M55.7 49.4l0.6 -4.7M80.1 67.9l1.9 -4.9M114.1 94.1l4.8 -2.4M115.3 49.3l2.8 -5.1M133.8 69.5l3.8 -1.5M133.5 81.9l4.8 -3.1M105.4 98.1l4.6 0.3M39.5 70.6l-0.6 -3.0M80.0 47.2l2.1 -2.8M57.9 67.3l0.8 -3.9M56.9 45.9l-0.5 -6.0M116.1 55.7l3.7 -1.9M95.3 88.8l5.0 -2.1M84.9 59.2l1.3 -5.6M127.1 87.6l4.3 0.4M50.3 56.5l-1.8 -3.5M113.7 103.8l3.5 -0.0M81.2 43.6l3.7 -4.6M113.9 60.8l2.0 -2.9M84.9 81.5l2.7 -2.3M64.9 57.2l1.9 -4.3M89.4 65.7l3.1 -4.8M86.6 59.1l1.0 -4.4M132.6 80.8l4.1 -2.8M100.3 68.3l2.9 -2.9M115.3 84.9l3.8 -1.2M134.7 78.8l5.3 0.0M88.9 66.8l2.9 -2.4M93.9 47.8l1.4 -2.9M69.1 71.2l2.9 -3.9M74.7 47.3l1.6 -5.7M57.6 72.4l1.5 -4.3M101.2 85.9l3.9 -1.8M80.1 66.8l3.1 -3.0M116.4 60.9l4.5 -2.6M114.3 49.3l2.8 -2.3M106.1 84.6l4.1 -0.6M46.3 53.5l0.2 -5.8M111.3 49.7l3.5 -3.7M92.7 78.0l3.5 -1.1M89.8 75.8l1.7 -2.7M65.5 66.3l0.2 -4.7M69.6 48.4l0.2 -3.8M98.5 82.1l4.2 -1.6M116.7 101.2l3.0 -0.7M105.2 84.7l4.3 -0.9M49.1 66.0l0.2 -5.0M102.2 45.6l1.8 -5.0M135.4 73.8l3.9 -3.0M119.6 87.4l3.2 -0.3M48.0 66.8l0.2 -4.0M50.4 68.6l0.4 -3.7M130.9 83.3l3.0 -2.0M36.5 68.3l-2.7 -3.7M98.2 89.2l5.1 -0.9M72.7 66.9l0.3 -4.8M51.9 73.7l-0.9 -2.9M109.5 98.2l4.2 0.8M97.8 41.3l1.0 -4.1M110.4 74.9l5.5 -2.2M105.2 72.9l3.9 -1.3M88.5 38.5l2.7 -4.8M99.6 66.4l2.1 -3.9M96.2 69.8l2.4 -2.1M96.8 83.9l5.3 -0.7M76.6 77.4l3.1 -3.0M104.3 45.5l2.8 -3.9M101.7 66.5l4.9 -2.2M84.6 80.8l2.8 -3.0M122.8 59.7l3.3 -1.8M118.3 54.7l2.1 -2.6M125.5 75.1l4.3 -3.4M91.3 36.0l0.7 -4.2M105.8 74.7l5.1 -1.9M64.1 64.0l0.6 -4.7M115.7 55.2l4.8 -2.4M90.2 35.6l2.1 -2.4M52.4 65.9l-1.6 -4.8M71.8 41.0l2.5 -5.4M113.2 95.1l3.6 0.5M115.4 63.8l3.5 -2.6M108.2 54.8l2.6 -2.3M50.8 53.9l0.2 -5.2M79.7 57.1l2.2 -4.9M125.2 69.8l2.7 -2.7M110.4 55.9l1.9 -2.6M75.4 72.8l2.0 -4.3M66.9 68.3l0.6 -3.8M69.6 64.4l0.9 -2.9M110.9 53.2l2.7 -1.4M110.7 100.1l3.8 0.5M67.2 36.6l2.3 -5.3M79.0 50.4l1.6 -2.9M96.7 56.7l3.4 -2.0M110.4 96.9l3.3 -1.6M122.5 97.6l4.7 0.6M110.5 96.5l3.1 0.3M104.9 73.0l2.0 -2.3M110.5 78.3l3.4 -2.1M65.8 56.8l2.0 -3.7M106.0 36.0l1.9 -3.7M51.5 71.5l-1.2 -2.8M128.5 51.9l3.7 -2.7M112.3 96.9l5.2 1.1M86.1 50.0l3.0 -2.8M127.8 103.6l5.4 -1.0M94.0 34.2l1.1 -5.7M108.9 71.2l3.3 -4.3M127.5 95.1l4.3 -0.6" stroke="#3a2c24" stroke-width="1" opacity=".9"/>
</g>
<circle cx="59" cy="89.5" r="3.3" fill="#14100f"/>
<circle cx="60" cy="88.5" r=".8" fill="#fff" opacity=".7"/>
<ellipse cx="39.5" cy="85" rx="1.2" ry="2.4" fill="#2a2220"/>
<ellipse cx="40" cy="101" rx="3.6" ry="3.4" fill="#3c2e32"/>
</svg></div>
<div class="th" style="left:633px;top:211px;width:145px"><svg viewBox="0 0 145 145" preserveAspectRatio="none">
<defs>
<filter id="an_b" x="-50%" y="-50%" width="200%" height="200%"><feGaussianBlur stdDeviation="5"/></filter>
<filter id="an_c" x="-50%" y="-50%" width="200%" height="200%"><feGaussianBlur stdDeviation="1.6"/></filter>
<filter id="an_d" x="-50%" y="-50%" width="200%" height="200%"><feGaussianBlur stdDeviation=".5"/></filter>
<filter id="an_n" color-interpolation-filters="sRGB" x="0" y="0" width="100%" height="100%"><feTurbulence type="fractalNoise" baseFrequency=".45 .18" numOctaves="2" seed="3"/><feColorMatrix type="matrix" values="0 0 0 0 .08  0 0 0 0 .24  0 0 0 0 .05  3 0 0 0 -1.25"/><feComposite in2="SourceGraphic" operator="in"/></filter>
<filter id="an_m" color-interpolation-filters="sRGB" x="0" y="0" width="100%" height="100%"><feTurbulence type="fractalNoise" baseFrequency=".5 .15" numOctaves="2" seed="9"/><feColorMatrix type="matrix" values="0 0 0 0 .55  0 0 0 0 .7  0 0 0 0 .2  0 3 0 0 -1.45"/><feComposite in2="SourceGraphic" operator="in"/></filter>
<linearGradient id="an_s" x1="0" y1="0" x2="0" y2="1"><stop offset="0" stop-color="#c4c9c9"/><stop offset=".22" stop-color="#a4b0b2"/><stop offset=".45" stop-color="#42606a"/><stop offset=".7" stop-color="#1e3a46"/><stop offset="1" stop-color="#1a3440"/></linearGradient>
<linearGradient id="an_g" x1="0" y1="0" x2="0" y2="1"><stop offset="0" stop-color="#1e4a1a"/><stop offset=".15" stop-color="#2e6a22"/><stop offset=".5" stop-color="#3e8028"/><stop offset="1" stop-color="#4a8c2c"/></linearGradient>
<linearGradient id="an_p" x1="0" y1="0" x2="0" y2="1"><stop offset="0" stop-color="#6a6038"/><stop offset=".5" stop-color="#8c7248"/><stop offset="1" stop-color="#9a7c54"/></linearGradient>
<linearGradient id="an_w" x1="0" y1="0" x2="0" y2="1"><stop offset="0" stop-color="#f6f7fa"/><stop offset="1" stop-color="#d4d9e4"/></linearGradient>
</defs>
<rect width="145" height="90" fill="url(#an_s)"/>
<g filter="url(#an_b)">
<ellipse cx="74" cy="12" rx="38" ry="15" fill="#f6f7f6"/>
<ellipse cx="125" cy="8" rx="22" ry="9" fill="#d0d0cc"/>
<ellipse cx="10" cy="30" rx="16" ry="9" fill="#b4b8b8"/>
<ellipse cx="10" cy="6" rx="16" ry="7" fill="#94a2ac"/>
</g>
<g filter="url(#an_c)">
<path d="M24 26L28 14L34 7L44 6L50 14L56 18L62 28L60 44L28 40Z" fill="#34525e"/>
<path d="M96 28L102 18L112 13L120 19L126 30L114 42L98 40Z" fill="#3e5e6a"/>
<path d="M132 14L142 14L145 42L134 38Z" fill="#34545e"/>
<path d="M0 42L40 44L60 60L60 88L0 88Z" fill="#1c3844"/>
<path d="M95 66L145 50L145 88L95 88Z" fill="#1e3c48"/>
<ellipse cx="124" cy="74" rx="12" ry="9" fill="#3a5c64"/>
<path d="M114 66L116 76L114 86" stroke="#b8c8d0" stroke-width=".8" fill="none"/>
</g>
<rect y="88" width="145" height="57" fill="url(#an_g)"/>
<rect y="88" width="145" height="57" fill="#000" filter="url(#an_n)"/>
<rect y="98" width="145" height="47" fill="#000" filter="url(#an_m)" opacity=".55"/>
<path d="M72 98L88 98L120 145L36 145Z" fill="url(#an_p)" filter="url(#an_c)"/>
<g filter="url(#an_d)">
<g fill="url(#an_w)">
<path d="M66 47C58 38 44 30 30 26L22 24C20 26 21 29 24 31C21 33 22 37 26 38C23 41 25 45 29 46C27 50 30 54 34 54C33 58 37 62 41 62C41 66 46 70 51 69C53 74 60 78 66 75C69 66 69 56 66 47Z"/>
<path d="M90 47C98 39 112 33 126 29L137 27C140 29 139 33 136 35C139 38 137 42 133 43C135 47 132 51 128 52C129 56 126 60 122 61C122 65 117 69 112 69C109 74 101 77 95 75C90 72 88 58 90 47Z"/>
</g>
<path d="M30 34L50 42M32 44L52 50M38 54L56 58M46 62L60 66" stroke="#c4cad8" stroke-width="1" fill="none"/>
<path d="M130 36L110 44M128 46L108 52M122 55L104 60M114 64L100 67" stroke="#c4cad8" stroke-width="1" fill="none"/>
<path d="M72 29C75 25 83 25 86 30C89 38 89 48 87 56L84 46L74 46L69 58C66 48 67 36 72 29Z" fill="#2a1a16"/>
<ellipse cx="78.500" cy="33" rx="3.6" ry="4.6" fill="#dcbcaa"/>
<path d="M74 45L84 45L89 50L91 68L88 82L66 82L69 62L69 50Z" fill="#d2b2a0"/>
<path d="M73 50L78 54L86 50L88 66L88 82C90 100 92 116 96 126L108 131C100 135 92 134 84 136C76 135 62 134 53 132L64 127C68 116 69 100 69 82L71 66Z" fill="#e6e8ee"/>
<path d="M78 84L80 130" stroke="#c4c8d4" stroke-width="1.5" fill="none"/>
<path d="M63 78.500L92 80.500" stroke="#3a3434" stroke-width="1.500"/>
</g>
</svg></div>
<div class="th" style="left:794px;top:211px;width:145px"><svg viewBox="0 0 145 145" preserveAspectRatio="none">
<defs>
<filter id="bf_b" x="-50%" y="-50%" width="200%" height="200%"><feGaussianBlur stdDeviation="7"/></filter>
<filter id="bf_c" x="-50%" y="-50%" width="200%" height="200%"><feGaussianBlur stdDeviation="1.2"/></filter>
<filter id="bf_d" x="-50%" y="-50%" width="200%" height="200%"><feGaussianBlur stdDeviation=".5"/></filter>
<linearGradient id="bf_a" x1="0" y1="0" x2="0" y2="1"><stop offset="0" stop-color="#986a26"/><stop offset=".45" stop-color="#a4762e"/><stop offset=".75" stop-color="#9c6e48"/><stop offset="1" stop-color="#986a54"/></linearGradient>
<radialGradient id="bf_p" gradientUnits="userSpaceOnUse" cx="44" cy="68" r="48"><stop offset="0" stop-color="#2846bc"/><stop offset=".4" stop-color="#4674e0"/><stop offset=".75" stop-color="#6a98ee"/><stop offset="1" stop-color="#a4bef4"/></radialGradient>
<radialGradient id="bf_q" cx=".45" cy=".3" r=".75"><stop offset="0" stop-color="#3a78e8"/><stop offset=".5" stop-color="#2050cc"/><stop offset="1" stop-color="#101e78"/></radialGradient>
</defs>
<rect width="145" height="145" fill="url(#bf_a)"/>
<g filter="url(#bf_b)">
<ellipse cx="30" cy="12" rx="30" ry="12" fill="#a87a32"/>
<ellipse cx="72" cy="8" rx="14" ry="10" fill="#764a1a"/>
<ellipse cx="120" cy="40" rx="28" ry="40" fill="#b48426"/>
<ellipse cx="110" cy="20" rx="20" ry="14" fill="#ba8a2c"/>
<ellipse cx="14" cy="34" rx="16" ry="8" fill="#b48c4c"/>
<ellipse cx="72" cy="45" rx="14" ry="20" fill="#b08040"/>
<ellipse cx="85" cy="132" rx="30" ry="12" fill="#b48a6c"/>
<ellipse cx="15" cy="135" rx="20" ry="14" fill="#a06c54"/>
<ellipse cx="135" cy="105" rx="14" ry="16" fill="#90683a"/>
</g>
<g filter="url(#bf_c)" stroke-linecap="round" fill="none">
<path d="M118 52L98 22M118 52L112 12M118 52L130 14M118 52L143 28M118 52L96 40M118 52L94 56M118 52L100 68M118 52L140 62M118 52L144 48M118 52L132 76" stroke="#c8962e" stroke-width="2.4" opacity=".8"/>
<path d="M121 60L121 78M106 60L118 58M128 30L142 30M96 34L106 36" stroke="#ecbc1c" stroke-width="3"/>
<path d="M46 92L48 145M32 104L32 145M20 118L22 145" stroke="#b08430" stroke-width="3.6"/>
<path d="M80 112L80 145M98 118L98 145" stroke="#b08430" stroke-width="3.6"/>
<path d="M4 108L24 104L40 98M52 96L36 106M70 116L86 112L110 118M60 100L50 106" stroke="#a88850" stroke-width="4.5"/>
</g>
<g filter="url(#bf_d)">
<path d="M0 84C4 78 16 76 24 80C30 88 30 98 24 104C16 108 6 106 0 100Z" fill="url(#bf_q)"/>
<path d="M66 92C66 82 72 76 80 73C86 76 94 74 100 76C108 82 110 96 106 104C98 112 84 112 76 108C70 104 66 98 66 92Z" fill="url(#bf_q)"/>
<path d="M78 75L74 86M92 76L94 90" stroke="#0e1c70" stroke-width="1.2" fill="none" opacity=".6"/>
<g fill="url(#bf_p)" stroke="#b4c8f6" stroke-width=".6">
<path d="M42 72C30 64 8 56 2 50C6 46 16 48 26 54C34 58 40 64 46 68Z"/>
<path d="M44 80C30 82 12 80 2 74C-2 70 0 64 6 64C18 64 32 70 46 72Z"/>
<path d="M40 68C30 56 12 40 16 36C24 32 34 42 42 56Z"/>
<path d="M40 64C30 50 22 36 28 33C36 31 42 42 48 58Z"/>
<path d="M56 76C68 66 88 60 91 65C90 72 76 78 60 80C52 85 46 85 38 82Z"/>
<path d="M56 68C66 58 82 50 85 54C86 60 76 66 64 72Z"/>
<path d="M52 66C58 54 70 40 76 42C80 48 72 58 60 68Z"/>
<path d="M50 62C52 50 56 38 60 36C64 42 62 54 58 64Z"/>
<path d="M38 62C34 44 38 31 46 30C56 32 55 48 52 64Z"/>
</g>
<ellipse cx="46" cy="69" rx="15" ry="11" fill="#3a60d4" filter="url(#bf_c)"/>
<ellipse cx="42" cy="66" rx="5" ry="3.6" fill="#4a2c60"/>
<ellipse cx="42" cy="79" rx="6" ry="2.5" fill="#3a3474"/>
</g>
<g filter="url(#bf_c)">
<ellipse cx="120" cy="126" rx="9" ry="10" fill="#e4d094"/>
<ellipse cx="120" cy="121" rx="5" ry="4" fill="#fff6dc"/>
<path d="M108 128L112 142L130 142L140 120L132 134L118 138Z" fill="#b08430"/>
</g>
</svg></div>
<div class="th" style="left:955px;top:211px;width:145px"><svg viewBox="0 0 145 145" preserveAspectRatio="none">
<defs>
<filter id="wf_b" x="-50%" y="-50%" width="200%" height="200%"><feGaussianBlur stdDeviation="8"/></filter>
<filter id="wf_c" x="-50%" y="-50%" width="200%" height="200%"><feGaussianBlur stdDeviation="1.400"/></filter>
<filter id="wf_d" x="-50%" y="-50%" width="200%" height="200%"><feGaussianBlur stdDeviation=".6"/></filter>
<linearGradient id="wf_a" x1="0" y1="0" x2="1" y2="0"><stop offset="0" stop-color="#b8a596"/><stop offset=".5" stop-color="#c9b3a0"/><stop offset="1" stop-color="#e8c8ac"/></linearGradient>
</defs>
<rect width="145" height="145" fill="url(#wf_a)"/>
<g filter="url(#wf_b)">
<ellipse cx="15" cy="8" rx="26" ry="10" fill="#c89880"/>
<ellipse cx="118" cy="40" rx="30" ry="42" fill="#f0d0b4"/>
<ellipse cx="60" cy="22" rx="20" ry="18" fill="#e4c4aa"/>
<ellipse cx="92" cy="35" rx="7" ry="26" fill="#c4a080" transform="rotate(14 92 35)"/>
<ellipse cx="20" cy="60" rx="22" ry="22" fill="#b0a094"/>
<ellipse cx="45" cy="125" rx="45" ry="26" fill="#a89c8a"/>
<ellipse cx="85" cy="78" rx="12" ry="18" fill="#a89484"/>
<ellipse cx="120" cy="100" rx="26" ry="18" fill="#e2c2a6"/>
<ellipse cx="125" cy="135" rx="26" ry="12" fill="#d8bca4"/>
<ellipse cx="10" cy="100" rx="12" ry="14" fill="#80706c"/>
</g>
<g filter="url(#wf_c)" fill="none" stroke-linecap="round">
<path d="M26 82C16 84 6 90 0 94" stroke="#d8ccc8" stroke-width="3.500"/>
<path d="M32 92C24 104 20 120 14 136" stroke="#c8b4a8" stroke-width="4"/>
<path d="M0 116L16 112M0 136L12 138" stroke="#c4b4a8" stroke-width="3"/>
</g>
<g filter="url(#wf_d)">
<path d="M20 62C26 52 34 44 40 40C48 42 60 40 66 44C70 50 68 56 66 60C72 64 74 72 72 76C78 78 80 82 78 86C72 88 68 90 66 92C68 98 66 102 62 104C52 104 42 100 34 92C26 88 20 80 18 74C17 70 18 66 20 62Z" fill="#f0eef2"/>
<path d="M20 62C18 68 20 74 26 76L44 74C36 74 26 70 20 62Z" fill="#8a58a0"/>
<path d="M22 77C30 76 40 78 46 84C44 90 36 90 30 86C26 84 22 80 22 77Z" fill="#2c1c50"/>
<path d="M28 80C28 86 28 90 30 92L34 88Z" fill="#7a4c98"/>
<path d="M34 92C40 94 48 92 52 90C46 90 40 88 36 86Z" fill="#6a4090"/>
<path d="M34 94C38 100 44 102 50 102C44 100 40 96 38 94Z" fill="#7a50a0"/>
<path d="M30 60C40 52 56 46 66 46C62 54 50 62 36 68Z" fill="#fbfafc"/>
</g>
</svg></div>
<div class="th" style="left:312px;top:372px;width:145px"><svg viewBox="0 0 145 145" preserveAspectRatio="none">
<defs>
<filter id="mt_b" x="-50%" y="-50%" width="200%" height="200%"><feGaussianBlur stdDeviation="6"/></filter>
<filter id="mt_c" x="-50%" y="-50%" width="200%" height="200%"><feGaussianBlur stdDeviation="1.5"/></filter>
<filter id="mt_e" x="-50%" y="-50%" width="200%" height="200%"><feGaussianBlur stdDeviation="3"/></filter>
<filter id="mt_d" x="-50%" y="-50%" width="200%" height="200%"><feGaussianBlur stdDeviation=".6"/></filter>
<filter id="mt_n" color-interpolation-filters="sRGB" x="0" y="0" width="100%" height="100%"><feTurbulence type="fractalNoise" baseFrequency=".16 .2" numOctaves="4" seed="4"/><feColorMatrix type="matrix" values="0 0 0 0 .32  0 0 0 0 .4  0 0 0 0 .5  2.2 0 0 0 -.86"/><feComposite in2="SourceGraphic" operator="in"/></filter>
<linearGradient id="mt_a" x1="0" y1="0" x2="1" y2=".5"><stop offset="0" stop-color="#0a3050"/><stop offset=".4" stop-color="#175380"/><stop offset=".7" stop-color="#3e74a0"/><stop offset="1" stop-color="#6a90b0"/></linearGradient>
</defs>
<rect width="145" height="145" fill="url(#mt_a)"/>
<g filter="url(#mt_b)">
<ellipse cx="20" cy="10" rx="40" ry="20" fill="#083050"/>
<ellipse cx="125" cy="4" rx="26" ry="9" fill="#a4bccf"/>
<ellipse cx="90" cy="22" rx="14" ry="12" fill="#4a7aa4"/>
<ellipse cx="10" cy="86" rx="24" ry="20" fill="#d8dde5"/>
<ellipse cx="20" cy="58" rx="30" ry="5" fill="#5c84a8"/>
<ellipse cx="88" cy="46" rx="10" ry="14" fill="#9cb8d2"/>
</g>
<g filter="url(#mt_e)">
<ellipse cx="66" cy="62" rx="16" ry="8" fill="#e6eaf0"/>
<ellipse cx="135" cy="5" rx="12" ry="5" fill="#c4d0dc"/>
</g>
<path d="M0 108L14 92L34 66L42 62L52 68L72 70L82 66L84 56L100 38L112 24L124 15L134 18L142 30L145 32V145H0Z" fill="#e4e8ee" filter="url(#mt_d)"/>
<path d="M0 108L14 92L34 66L42 62L52 68L72 70L82 66L84 56L100 38L112 24L124 15L134 18L142 30L145 32V145H0Z" fill="#000" filter="url(#mt_n)"/>
<g filter="url(#mt_c)">
<path d="M82 64L84 54L100 38L114 24L118 30L106 46L98 54L90 64Z" fill="#3a5068"/>
<path d="M34 68L30 80L32 100L20 108L6 106L0 112L14 92Z" fill="#2c4056"/>
<path d="M0 112L10 116L14 124L0 134Z" fill="#1c2c3c"/>
<path d="M140 60L145 58L145 118L136 120L126 112L124 96L130 84L136 76Z" fill="#2e4052"/>
<path d="M145 116L130 124L112 142L108 145L145 145Z" fill="#55585e"/>
<path d="M134 20L142 30L145 40L138 38L134 28Z" fill="#6a5058"/>
<path d="M118 30L124 18L132 22L130 40L124 46Z" fill="#f2f5f8"/>
<path d="M36 68L44 66L50 80L44 92L34 90Z" fill="#f0f3f6" opacity=".85"/>
<path d="M20 108L40 104L34 114L16 116Z" fill="#d4dae2"/>
</g>
<g filter="url(#mt_e)">
<path d="M60 100L90 88L100 110L124 122L110 138L70 142L40 136L30 124Z" fill="#f2f4f7" opacity=".75"/>
<path d="M100 50L120 44L126 70L112 80Z" fill="#eef1f5" opacity=".6"/>
<path d="M96 70L108 86L112 104L104 100L98 88Z" fill="#5a6c80" opacity=".7"/>
<path d="M60 76L78 74L84 86L70 90Z" fill="#6a7c90" opacity=".6"/>
</g>
</svg></div>
<div class="th" style="left:473px;top:372px;width:144px"><svg viewBox="0 0 145 145" preserveAspectRatio="none">
<defs>
<filter id="md_b" x="-50%" y="-50%" width="200%" height="200%"><feGaussianBlur stdDeviation="3"/></filter>
<filter id="md_c" x="-50%" y="-50%" width="200%" height="200%"><feGaussianBlur stdDeviation="1"/></filter>
<filter id="md_d" x="-50%" y="-50%" width="200%" height="200%"><feGaussianBlur stdDeviation=".5"/></filter>
<linearGradient id="md_a" x1="0" y1="0" x2="0" y2="1"><stop offset="0" stop-color="#7c9cd6"/><stop offset=".35" stop-color="#a9bfe6"/><stop offset=".75" stop-color="#dfe6f2"/><stop offset="1" stop-color="#eef0f2"/></linearGradient>
<linearGradient id="md_g" x1="0" y1="0" x2="1" y2="0"><stop offset="0" stop-color="#8ca82a"/><stop offset=".5" stop-color="#a4b624"/><stop offset="1" stop-color="#b8c020"/></linearGradient>
<linearGradient id="md_t" x1="0" y1="0" x2="0" y2="1"><stop offset="0" stop-color="#3c5a28"/><stop offset="1" stop-color="#26401a"/></linearGradient>
<clipPath id="md_k"><rect x="0" y="27" width="145" height="90"/></clipPath>
</defs>
<rect width="145" height="145" fill="#f0f0f1"/>
<rect x=".5" y=".5" width="144" height="144" fill="none" stroke="#000" stroke-opacity=".07" stroke-width="5" filter="url(#md_b)"/>
<g clip-path="url(#md_k)">
<rect x="0" y="27" width="145" height="42" fill="url(#md_a)"/>
<g filter="url(#md_b)">
<ellipse cx="110" cy="52" rx="22" ry="5" fill="#f4f4f6"/>
<ellipse cx="30" cy="62" rx="40" ry="6" fill="#f2f2f0"/>
<ellipse cx="125" cy="62" rx="14" ry="3" fill="#b4bcd0"/>
<ellipse cx="20" cy="32" rx="30" ry="5" fill="#6c90d0"/>
</g>
<g filter="url(#md_c)">
<ellipse cx="106" cy="49" rx="6" ry="2" fill="#a4a8b8"/>
<ellipse cx="114" cy="34" rx="5" ry="1.500" fill="#fafafa"/>
<path d="M0 72L20 72L40 68L58 64L76 66L90 66L100 64L116 66L130 68L140 64L145 64V100H0Z" fill="#908f84"/>
<path d="M20 72L40 68L58 64L76 66L60 70L40 76Z" fill="#b4b0a0"/>
<path d="M36 84L60 74L90 72L100 66L120 68L145 72V100H36Z" fill="#6e7460"/>
<path d="M100 66L116 66L130 68L120 74L104 72Z" fill="#a8a494"/>
</g>
<g filter="url(#md_d)">
<path d="M0 78L6 80L10 84L16 76L20 84L26 80L30 86L36 84L42 82L46 88L52 80L56 86L60 80L64 86L70 82L74 84L78 72L82 70L85 65L88 70L92 78L96 86L100 82L106 88L112 84L118 90L122 82L126 78L130 86L136 84L140 78L145 74V117H0Z" fill="url(#md_t)"/>
<path d="M96 90L104 84L112 86L118 92L114 104L106 108L98 104Z" fill="#48682a"/>
<path d="M110 88L118 84L120 92L114 98Z" fill="#6a8a2c"/>
<path d="M0 99L10 97L30 95L50 98L70 104L90 110L104 113L118 117H0Z" fill="url(#md_g)"/>
<path d="M0 86L12 88L24 90L24 94L0 98Z" fill="#b0a48c"/>
<path d="M0 76L4 76L6 86L0 88Z" fill="#4a3424"/>
<path d="M40 98L56 112" stroke="#b89c50" stroke-width="1.200" fill="none"/>
</g>
</g>
</svg></div>
<div class="th" style="left:633px;top:372px;width:145px"><svg viewBox="0 0 145 145" preserveAspectRatio="none">
<defs>
<filter id="lk_b" x="-50%" y="-50%" width="200%" height="200%"><feGaussianBlur stdDeviation="5"/></filter>
<filter id="lk_c" x="-50%" y="-50%" width="200%" height="200%"><feGaussianBlur stdDeviation="1.300"/></filter>
<filter id="lk_e" x="-50%" y="-50%" width="200%" height="200%"><feGaussianBlur stdDeviation="2.500"/></filter>
<filter id="lk_d" x="-50%" y="-50%" width="200%" height="200%"><feGaussianBlur stdDeviation=".6"/></filter>
<linearGradient id="lk_a" x1="0" y1="0" x2="0" y2="1"><stop offset="0" stop-color="#5a8eb0"/><stop offset=".5" stop-color="#4a7ca4"/><stop offset="1" stop-color="#6aa0c8"/></linearGradient>
<linearGradient id="lk_w" x1="0" y1="0" x2="0" y2="1"><stop offset="0" stop-color="#0d4e60"/><stop offset=".3" stop-color="#0e6a86"/><stop offset=".6" stop-color="#0f86ae"/><stop offset="1" stop-color="#1a9cc4"/></linearGradient>
<linearGradient id="lk_f" x1="0" y1="0" x2="0" y2="1"><stop offset="0" stop-color="#2a5a26"/><stop offset="1" stop-color="#123a1c"/></linearGradient>
</defs>
<rect width="145" height="72" fill="url(#lk_a)"/>
<g filter="url(#lk_b)">
<ellipse cx="96" cy="10" rx="16" ry="8" fill="#c8c0c0"/>
<ellipse cx="30" cy="6" rx="30" ry="6" fill="#6a9cc0"/>
<ellipse cx="130" cy="20" rx="16" ry="8" fill="#4a78a0"/>
<ellipse cx="50" cy="22" rx="20" ry="6" fill="#4c7498"/>
</g>
<g filter="url(#lk_d)">
<path d="M0 10L4 12L10 22L16 24L22 20L30 22L34 30L40 30L46 28L50 34L56 32L60 28L66 36L76 32L84 28L92 24L100 32L106 30L112 26L120 28L130 32L140 30L145 28V72H0Z" fill="#465260"/>
<path d="M0 10L4 12L7 20L0 22Z" fill="#e8642c"/>
<path d="M14 24L22 20L30 22L32 27L20 28Z" fill="#c85a2c"/>
<path d="M40 30L46 28L50 34L44 34Z" fill="#d06c40"/>
<path d="M54 33L60 28L66 36L76 32L84 28L92 24L100 32L106 30L112 26L120 28L130 32L140 30L145 28V40L130 42L116 38L104 36L92 38L80 40L70 42L62 38Z" fill="#e06a30"/>
<path d="M84 28L92 24L98 30L90 34Z" fill="#c4502a"/>
<path d="M14 24L18 34L24 44L28 50L26 50L20 42L16 34Z" fill="#e4ecf4"/>
<path d="M6 50L16 58L30 66L34 68L28 68L14 60Z" fill="#d8e4ee"/>
<path d="M66 52L80 54L92 56L106 50L116 48L124 42L130 42L118 52L100 56L80 58Z" fill="#dfe8f0"/>
<path d="M0 26L14 30L24 46L34 56L40 64L20 70L0 62Z" fill="#3c4652"/>
<path d="M30 34L50 36L62 44L68 56L50 62L38 60L30 48Z" fill="#3a3e46"/>
<path d="M14 56L30 60L40 66L30 70L18 66Z" fill="#8a9494"/>
</g>
<g filter="url(#lk_c)">
<path d="M0 60L10 64L24 70L0 72Z" fill="#1a3428"/>
<path d="M34 68L50 62L56 64L40 70Z" fill="#1c4024"/>
</g>
<rect y="71" width="145" height="74" fill="url(#lk_w)"/>
<g filter="url(#lk_e)">
<path d="M0 74L40 72L36 90L30 110L10 125L0 130Z" fill="#2a6c88"/>
<path d="M14 84L30 74L28 88L22 108L18 112Z" fill="#7cc4dc"/>
<path d="M40 76L70 84L60 100L46 98Z" fill="#1c5c78"/>
<path d="M62 96L76 90L92 96L104 92L120 94L128 100L116 104L100 102L92 108L78 102Z" fill="#d89c80"/>
<path d="M22 112L34 110L32 116L24 118Z" fill="#8a7878"/>
<ellipse cx="96" cy="120" rx="10" ry="6" fill="#6a9cb4"/>
<ellipse cx="110" cy="130" rx="30" ry="8" fill="#0c7098"/>
<path d="M60 78L145 84L145 100L130 98L110 90L80 88Z" fill="#0c4450"/>
<ellipse cx="4" cy="128" rx="5" ry="3" fill="#a0b0c0"/>
</g>
<g filter="url(#lk_d)">
<path d="M54 68L64 64L80 60L100 56L120 52L136 46L145 42V86L138 84L124 80L110 78L90 76L70 76L56 74Z" fill="url(#lk_f)"/>
<path d="M122 82L132 80L136 83L126 85Z" fill="#c8b090"/>
<path d="M136 76L142 74L145 78L145 90L138 88Z" fill="#2c6434"/>
</g>
</svg></div>
<div class="th" style="left:794px;top:372px;width:145px"><svg viewBox="0 0 145 145" preserveAspectRatio="none">
<defs>
<filter id="ln_b" x="-50%" y="-50%" width="200%" height="200%"><feGaussianBlur stdDeviation="6"/></filter>
<filter id="ln_c" x="-50%" y="-50%" width="200%" height="200%"><feGaussianBlur stdDeviation="2.500"/></filter>
<filter id="ln_d" x="-50%" y="-50%" width="200%" height="200%"><feGaussianBlur stdDeviation=".8"/></filter>
<filter id="ln_n" color-interpolation-filters="sRGB" x="0" y="0" width="100%" height="100%"><feTurbulence type="fractalNoise" baseFrequency=".5 .12" numOctaves="2" seed="5"/><feColorMatrix type="matrix" values="0 0 0 0 0  0 0 0 0 0  0 0 0 0 0  3 0 0 0 -1.250"/><feComposite in2="SourceGraphic" operator="in"/></filter>
</defs>
<rect width="145" height="145" fill="#060403"/>
<g filter="url(#ln_b)">
<ellipse cx="20" cy="75" rx="20" ry="36" fill="#5a3e28"/>
<ellipse cx="14" cy="55" rx="10" ry="16" fill="#6a4a30"/>
<ellipse cx="130" cy="100" rx="13" ry="26" fill="#3a2616"/>
<ellipse cx="136" cy="30" rx="9" ry="28" fill="#a08468"/>
<ellipse cx="30" cy="125" rx="14" ry="12" fill="#2e2012"/>
<ellipse cx="70" cy="12" rx="50" ry="14" fill="#030201"/>
<ellipse cx="110" cy="128" rx="12" ry="12" fill="#2c1c10"/>
</g>
<g filter="url(#ln_c)">
<path d="M36 40C46 30 60 26 72 30C84 26 98 30 104 42C108 56 106 76 104 92C102 108 96 122 84 132C76 138 62 138 54 132C44 122 40 108 38 92C34 76 32 54 36 40Z" fill="#5c432e"/>
<path d="M56 26L86 26L80 46L64 46Z" fill="#150d08"/>
<ellipse cx="70" cy="70" rx="18" ry="14" fill="#7a6048"/>
<ellipse cx="56" cy="104" rx="15" ry="10" fill="#b08c68"/>
<ellipse cx="86" cy="104" rx="15" ry="10" fill="#b08c68"/>
<ellipse cx="70" cy="126" rx="18" ry="8" fill="#a08060"/>
<path d="M52 116L70 110L88 116L84 120L70 116L56 120Z" fill="#1a100a"/>
<path d="M40 56L48 50L52 62L50 76L42 70Z" fill="#3a2818"/>
<path d="M88 52L98 50L100 64L94 74L88 64Z" fill="#3a2818"/>
<path d="M96 70L102 72L100 90L94 92Z" fill="#b08c6c"/>
</g>
<g filter="url(#ln_d)">
<path d="M52 88C56 84 66 86 70 88C74 86 84 84 88 88C86 94 78 96 74 98L70 104L66 98C60 96 54 94 52 88Z" fill="#0c0806"/>
<path d="M69 100L71 100L71 110L69 110Z" fill="#0c0806"/>
<path d="M36 52C40 48 46 50 50 54C46 58 40 58 36 52Z" fill="#d4bc98"/>
<path d="M86 54C90 50 96 50 100 52C96 58 90 58 86 54Z" fill="#c8ac88"/>
<circle cx="43.500" cy="52.500" r="2" fill="#2a1c10"/>
<circle cx="92" cy="52.500" r="2" fill="#2a1c10"/>
<path d="M34 50C40 46 48 48 52 54" stroke="#0c0806" stroke-width="1.500" fill="none"/>
<path d="M84 54C90 48 96 48 102 50" stroke="#0c0806" stroke-width="1.500" fill="none"/>
</g>
<g filter="url(#ln_d)"><path d="M7 84l-1 14M19 45l2 16M8 59l-6 12M25 78l-3 10M19 109l-3 15M20 45l-5 13M9 42l-5 12M22 110l-5 17M12 104l-2 17M26 48l1 11M29 75l-3 11M15 71l-1 14M18 112l-5 17M26 119l-3 10M26 117l-6 13M21 57l-5 13M9 45l-7 17M3 104l-1 10M9 102l-4 8M18 44l-4 11M26 118l-3 18M9 46l-2 8M6 73l-2 10M1 109l-1 18M27 70l-2 13M19 88l-3 14M28 81l-2 15M7 64l-6 12M16 41l-2 14M1 89l-2 9M19 77l-3 11M21 99l1 9M20 117l-0 13M18 66l-1 11M11 88l-1 12M23 42l-3 15M9 58l-4 10M6 75l-3 9M10 67l-5 12M26 54l-1 15" stroke="#8a6440" stroke-width="1.0" opacity="0.55" fill="none" stroke-linecap="round"/><path d="M27 76l-0 10M16 55l-6 16M6 62l-5 14M24 68l1 11M24 62l-1 12M13 73l-4 9M0 115l-7 17M13 116l-5 10M22 107l-4 13M9 67l-0 9M18 63l-3 8M27 95l-7 16M27 86l2 16M5 64l-4 13M12 115l-3 11M8 109l-3 16M11 56l-3 16M5 103l-7 15M25 41l-4 16M1 62l-0 14M13 78l-3 8M2 50l1 9M29 108l1 13M9 65l-1 15M18 69l0 12" stroke="#140c08" stroke-width="1.0" opacity="0.6" fill="none" stroke-linecap="round"/><path d="M116 106l2 12M115 82l5 13M138 95l1 14M126 94l4 15M126 115l3 10M130 115l6 11M126 127l-0 12M142 121l5 12M116 123l3 17M138 113l2 14M115 108l5 8M138 73l5 8M141 82l9 14M116 125l3 16M143 108l1 9M137 103l1 9M137 131l6 10M131 124l4 9M120 110l1 12M124 96l4 12M115 103l-0 12M137 80l2 16M134 104l4 14M142 80l8 14M142 104l5 15M118 87l6 13M122 85l3 18M122 116l5 16M131 87l4 8M128 95l5 11" stroke="#7a5434" stroke-width="1.0" opacity="0.5" fill="none" stroke-linecap="round"/><path d="M123 120l8 16M128 109l5 16M139 106l4 15M140 96l2 18M127 85l6 14M134 132l0 11M118 87l7 14M140 128l7 15M122 98l1 9M115 124l5 11M131 114l6 10M126 102l6 13M144 95l2 9M121 113l8 15M142 76l-0 12M137 119l6 14M134 122l6 14M144 114l2 9M128 93l2 15M131 82l2 14" stroke="#0c0806" stroke-width="1.0" opacity="0.6" fill="none" stroke-linecap="round"/><path d="M128 44l2 8M144 7l6 12M137 28l3 11M131 9l8 11M140 27l2 10M130 19l1 8M135 12l2 10M131 20l4 13M131 42l5 8M126 6l2 13M128 9l5 12M141 37l2 8M132 10l4 11M128 13l1 7M141 45l1 10M136 29l4 15M138 15l1 11M137 36l8 11M138 25l4 10M128 26l7 9M138 22l5 15M143 7l2 12M125 18l4 7M135 46l6 13M139 7l2 12M143 36l2 10" stroke="#c8ac88" stroke-width="1.2" opacity="0.7" fill="none" stroke-linecap="round"/><path d="M141 51l1 11M139 27l4 6M124 11l6 10M138 30l5 12M129 26l2 10M126 49l2 10M131 29l3 9M122 11l1 8M133 11l4 7M131 9l5 6M126 27l4 6M132 22l2 7M131 22l9 12M127 5l3 8" stroke="#1c120c" stroke-width="1.2" opacity="0.6" fill="none" stroke-linecap="round"/><path d="M49 127l-1 9M52 125l-7 11M58 126l-2 11M54 135l-2 9M50 144l-3 8M31 120l-1 9M32 136l-6 9M59 131l-9 15M58 119l-3 14M58 120l-4 16M33 129l-4 15M58 123l-7 14M55 133l-7 10M42 124l-7 11M38 123l-7 13M51 128l-3 9M51 119l-5 15M50 121l-3 16M49 142l-7 11M57 138l-3 12" stroke="#5c4028" stroke-width="1.0" opacity="0.5" fill="none" stroke-linecap="round"/><path d="M87 129l1 9M102 121l8 12M92 119l8 12M103 118l9 16M92 133l6 15M103 139l3 10M90 120l1 9M86 144l9 15M88 131l8 14M103 135l3 17M95 134l4 9M110 134l2 10M101 131l2 9M95 131l8 11M107 129l4 14M91 127l0 12M98 120l5 9M113 138l2 18M103 143l4 12M113 142l1 13" stroke="#5c4028" stroke-width="1.0" opacity="0.5" fill="none" stroke-linecap="round"/></g>
<rect width="145" height="145" fill="#000" filter="url(#ln_n)" opacity=".3"/>
</svg></div>
<div class="th" style="left:955px;top:372px;width:145px"><svg viewBox="0 0 145 145" preserveAspectRatio="none">
<defs>
<filter id="um_b" x="-50%" y="-50%" width="200%" height="200%"><feGaussianBlur stdDeviation="5"/></filter>
<filter id="um_c" x="-50%" y="-50%" width="200%" height="200%"><feGaussianBlur stdDeviation="2"/></filter>
<filter id="um_d" x="-50%" y="-50%" width="200%" height="200%"><feGaussianBlur stdDeviation=".8"/></filter>
<linearGradient id="um_a" x1="0" y1="0" x2="0" y2="1"><stop offset="0" stop-color="#2c5478"/><stop offset=".25" stop-color="#4a6c98"/><stop offset=".5" stop-color="#3c3044"/><stop offset=".7" stop-color="#4c3c64"/><stop offset="1" stop-color="#44366a"/></linearGradient>
<linearGradient id="um_u" x1="0" y1="0" x2="1" y2="0"><stop offset="0" stop-color="#040a10"/><stop offset=".4" stop-color="#0c1c2c"/><stop offset=".68" stop-color="#183248"/><stop offset="1" stop-color="#0a1624"/></linearGradient>
</defs>
<rect width="145" height="145" fill="url(#um_a)"/>
<g filter="url(#um_b)">
<ellipse cx="95" cy="30" rx="16" ry="14" fill="#6c88b8"/>
<ellipse cx="60" cy="10" rx="30" ry="8" fill="#3a6890"/>
<ellipse cx="130" cy="30" rx="18" ry="22" fill="#2a1c30"/>
<ellipse cx="120" cy="6" rx="20" ry="6" fill="#3c6a8c"/>
<ellipse cx="110" cy="52" rx="36" ry="10" fill="#1c1418"/>
<ellipse cx="118" cy="110" rx="30" ry="26" fill="#54387a"/>
<ellipse cx="85" cy="120" rx="12" ry="30" fill="#7a6470"/>
<ellipse cx="110" cy="78" rx="30" ry="8" fill="#6a5060"/>
<ellipse cx="8" cy="10" rx="10" ry="12" fill="#1a1c28"/>
</g>
<g filter="url(#um_c)">
<path d="M82 0L104 0L100 12L86 12Z" fill="#1c2c48"/>
<ellipse cx="112" cy="40" rx="6" ry="5" fill="#f0d488"/>
<ellipse cx="124" cy="35" rx="6" ry="4" fill="#d89420"/>
<ellipse cx="134" cy="33" rx="3.500" ry="3.500" fill="#e8b838"/>
<ellipse cx="143" cy="26" rx="2.500" ry="3" fill="#e0b040"/>
<ellipse cx="84" cy="44" rx="4" ry="3.500" fill="#e8b880"/>
<ellipse cx="94" cy="52" rx="3" ry="3" fill="#e84424"/>
<ellipse cx="101" cy="49" rx="4" ry="3.500" fill="#e06838"/>
<ellipse cx="82" cy="56" rx="9" ry="3.500" fill="#e8b020"/>
<ellipse cx="62" cy="56" rx="9" ry="6" fill="#f4ece4"/>
<ellipse cx="52" cy="61" rx="6" ry="5" fill="#f8f0e8"/>
<ellipse cx="98" cy="58" rx="4" ry="5" fill="#d8b8a0"/>
<ellipse cx="110" cy="57" rx="5" ry="5" fill="#d0a890"/>
<ellipse cx="123" cy="57" rx="4" ry="6" fill="#b89088"/>
<ellipse cx="140" cy="62" rx="4" ry="5" fill="#d0a070"/>
<ellipse cx="78" cy="65" rx="3.500" ry="3.500" fill="#c89030"/>
<ellipse cx="69" cy="70" rx="4" ry="4" fill="#f8f4e8"/>
<ellipse cx="76" cy="71" rx="3.500" ry="3.500" fill="#f4ecd8"/>
<ellipse cx="89" cy="71" rx="5" ry="4.500" fill="#fcf4e0"/>
<ellipse cx="101" cy="69" rx="4" ry="4" fill="#e07838"/>
<ellipse cx="107" cy="71" rx="3.500" ry="3" fill="#e05028"/>
<ellipse cx="119" cy="68" rx="5" ry="4.500" fill="#e45c28"/>
<ellipse cx="135" cy="72" rx="7" ry="5" fill="#d8a898"/>
<ellipse cx="113" cy="77" rx="3" ry="3" fill="#c88838"/>
<ellipse cx="69" cy="79" rx="3.500" ry="3.500" fill="#f8f4ec"/>
<ellipse cx="76" cy="81" rx="4" ry="4.500" fill="#f4ece0"/>
<ellipse cx="78" cy="75" rx="3" ry="3" fill="#e8c890"/>
<path d="M86 78L92 78L92 98L90 120L87 98Z" fill="#f0e0d0"/>
<path d="M82 86L100 100L124 128L140 145L132 145L112 124L92 102Z" fill="#c89840"/>
<path d="M108 96L114 96L116 122L110 124Z" fill="#b08878"/>
<path d="M96 80L130 86L110 90Z" fill="#5c6c9c"/>
<path d="M118 116L138 116L138 120L118 121Z" fill="#8c80b0"/>
<path d="M94 122L104 140L96 145L90 145Z" fill="#14203c"/>
<rect x="73" y="86" width="4" height="16" fill="#b8a8a0"/>
<ellipse cx="5" cy="19" rx="4.500" ry="4" fill="#fce0a0"/>
<rect x="52" y="66" width="8" height="12" fill="#b8b4c8"/>
</g>
<g filter="url(#um_d)">
<path d="M0 30C10 20 20 16 31 15C50 16 70 26 84 42C70 46 52 50 40 54L0 54Z" fill="url(#um_u)"/>
<path d="M30.500 4L32 4L32 16L30.500 16Z" fill="#1a2430"/>
<path d="M31 16L28 28L36 50" stroke="#3a5a7c" stroke-width="1.500" fill="none" opacity=".7"/>
<path d="M0 54L40 54C50 60 56 70 58 80L72 82L74 104L60 106L52 110L50 145L0 145Z" fill="#050a0e"/>
<path d="M52 110L72 108L76 112L78 145L50 145Z" fill="#1c1a22"/>
<ellipse cx="18" cy="63" rx="7" ry="4" fill="#3a2a20"/>
<path d="M76 84L80 84L80 130L77 130Z" fill="#2a2430"/>
</g>
</svg></div>
<div class="th" style="left:312px;top:533px;width:145px"><svg viewBox="0 0 145 145" preserveAspectRatio="none">
<defs>
<filter id="bc_b" x="-50%" y="-50%" width="200%" height="200%"><feGaussianBlur stdDeviation="6"/></filter>
<filter id="bc_c" x="-50%" y="-50%" width="200%" height="200%"><feGaussianBlur stdDeviation="2"/></filter>
<filter id="bc_d" x="-50%" y="-50%" width="200%" height="200%"><feGaussianBlur stdDeviation=".5"/></filter>
<linearGradient id="bc_a" x1="0" y1="0" x2="0" y2="1"><stop offset="0" stop-color="#efb868"/><stop offset=".25" stop-color="#f8c468"/><stop offset=".53" stop-color="#f6b255"/><stop offset=".55" stop-color="#c8947c"/><stop offset=".66" stop-color="#d09068"/><stop offset=".72" stop-color="#f2b868"/><stop offset=".85" stop-color="#e6a658"/><stop offset=".93" stop-color="#b07438"/><stop offset="1" stop-color="#c08444"/></linearGradient>
<linearGradient id="bc_m" x1="0" y1="0" x2="0" y2="1"><stop offset="0" stop-color="#7c340c"/><stop offset=".4" stop-color="#8c4418"/><stop offset=".75" stop-color="#8a4420"/><stop offset="1" stop-color="#6a300c"/></linearGradient>
</defs>
<rect width="145" height="145" fill="url(#bc_a)"/>
<g filter="url(#bc_b)">
<ellipse cx="72" cy="40" rx="34" ry="30" fill="#fee6a4"/>
<ellipse cx="20" cy="7" rx="28" ry="7" fill="#d89c64"/>
<ellipse cx="130" cy="8" rx="14" ry="8" fill="#e4a868"/>
<ellipse cx="125" cy="60" rx="24" ry="14" fill="#f6b050"/>
<ellipse cx="10" cy="60" rx="12" ry="18" fill="#f4ac4c"/>
<ellipse cx="66" cy="112" rx="12" ry="14" fill="#fff0c0"/>
<ellipse cx="120" cy="92" rx="30" ry="8" fill="#9c7c7c"/>
<ellipse cx="12" cy="88" rx="16" ry="6" fill="#a07c74"/><ellipse cx="10" cy="50" rx="14" ry="20" fill="#f2a848"/><ellipse cx="138" cy="50" rx="12" ry="20" fill="#f4ac4c"/>
<ellipse cx="72" cy="140" rx="80" ry="9" fill="#9c6834"/><ellipse cx="30" cy="128" rx="30" ry="4" fill="#b87c44"/><ellipse cx="118" cy="132" rx="30" ry="3" fill="#a8743c"/>
<ellipse cx="120" cy="118" rx="24" ry="8" fill="#f2b464"/>
</g>
<g filter="url(#bc_c)">
<ellipse cx="68" cy="39" rx="10" ry="6" fill="#fffbea"/>
<ellipse cx="85" cy="12" rx="6" ry="3" fill="#e4a870"/>
<ellipse cx="66" cy="108" rx="6" ry="8" fill="#fffbe6"/>
<path d="M100 98L145 104L145 110L100 104Z" fill="#b89088"/>
<path d="M50 96L80 98L80 101L50 100Z" fill="#d88870"/>
<ellipse cx="102" cy="120" rx="5" ry="7" fill="#e8c898"/>
</g>
<g filter="url(#bc_d)">
<path d="M34 20C42 18 48 24 46 34L46 40C52 42 54 50 58 58L66 68L74 74L72 78L64 74L52 60L50 62C52 76 52 92 48 104L46 112L50 128L46 130L42 114L38 116L36 130L32 130L30 114C22 114 18 110 16 106C18 92 22 80 24 72C20 76 18 82 16 88L13 86C14 76 18 66 22 58C24 48 28 40 28 36C28 28 30 22 34 20Z" fill="url(#bc_m)"/>
<path d="M34 20C42 18 48 24 46 34L44 50L36 58L28 56L24 50C26 40 28 28 34 20Z" fill="#7c3410"/>
<path d="M26 62L48 60C52 76 52 92 48 104L40 114L24 114L16 106C18 92 22 76 26 62Z" fill="#b0704c" opacity=".8"/>
<path d="M72 76L80 80C80 74 82 64 88 60C94 60 96 66 94 72L96 78L104 72L112 68L114 70L106 76L98 80L98 96L100 108L96 122L92 124L90 128L86 128L86 122L76 122C78 110 80 94 80 84L72 80Z" fill="#984c20"/>
<ellipse cx="87" cy="66" rx="6.5" ry="7" fill="#9c4a18"/>
<path d="M82 82L96 82L98 96L100 108L94 112L80 110L80 96Z" fill="#d48c80"/>
<path d="M78 112L96 114L94 122L78 122Z" fill="#e8a830"/>
</g>
</svg></div>
<div class="th" style="left:473px;top:533px;width:144px"><svg viewBox="0 0 145 145" preserveAspectRatio="none">
<defs>
<filter id="jp_b" x="-50%" y="-50%" width="200%" height="200%"><feGaussianBlur stdDeviation="5"/></filter>
<filter id="jp_c" x="-50%" y="-50%" width="200%" height="200%"><feGaussianBlur stdDeviation="1.500"/></filter>
<filter id="jp_d" x="-50%" y="-50%" width="200%" height="200%"><feGaussianBlur stdDeviation=".5"/></filter>
<linearGradient id="jp_a" x1="0" y1="0" x2="0" y2="1"><stop offset="0" stop-color="#644a2a"/><stop offset=".18" stop-color="#8a6030"/><stop offset=".35" stop-color="#c08438"/><stop offset=".5" stop-color="#d68c34"/><stop offset=".62" stop-color="#d08028"/><stop offset=".66" stop-color="#b86820"/><stop offset="1" stop-color="#a05c20"/></linearGradient>
<linearGradient id="jp_r" x1="0" y1="0" x2="0" y2="1"><stop offset="0" stop-color="#26180f"/><stop offset="1" stop-color="#1a100a"/></linearGradient>
</defs>
<rect width="145" height="145" fill="url(#jp_a)"/>
<g filter="url(#jp_b)">
<ellipse cx="20" cy="30" rx="40" ry="5" fill="#8a6238"/>
<ellipse cx="120" cy="40" rx="30" ry="8" fill="#a07438"/>
<ellipse cx="30" cy="55" rx="34" ry="8" fill="#e09a48"/>
<ellipse cx="110" cy="68" rx="40" ry="8" fill="#c88838"/>
<ellipse cx="20" cy="85" rx="26" ry="6" fill="#d07a20"/>
<ellipse cx="90" cy="88" rx="40" ry="5" fill="#e09430"/>
<ellipse cx="70" cy="78" rx="20" ry="3" fill="#9c6c30"/>
<ellipse cx="80" cy="8" rx="60" ry="6" fill="#8c6838"/>
</g>
<g filter="url(#jp_c)">
<path d="M20 98L40 96L60 96L76 95L90 94L104 96L120 95L124 98L110 112L40 112Z" fill="#3c3230"/>
<path d="M34 110L60 108L104 110L98 124L88 138L76 138L60 128L44 118Z" fill="#d09850"/>
<path d="M52 114L58 111L66 109L76 111L82 115L80 118L70 119L58 118Z" fill="#30241c"/>
<path d="M64 124L90 122L88 126L68 128Z" fill="#4a3424"/>
</g>
<g filter="url(#jp_d)">
<path d="M0 88L6 90L16 96L26 104L36 114L46 122L56 128L66 132L78 136L84 138L86 145L0 145Z" fill="url(#jp_r)"/>
<path d="M145 92L136 94L126 96L118 100L112 106L104 116L98 122L90 128L84 134L84 145L145 145Z" fill="url(#jp_r)"/>
<g fill="#16100e">
<ellipse cx="59" cy="28.500" rx="3.600" ry="3"/>
<path d="M40 30L54 30L57 31L60 34L70 35.500L70 37.500L59 37L55 42L52 45L47 44L50 37L52 33L40 32Z"/>
<path d="M48 43L56 44L63 47L65 50L64 62L67 65L67 67L61 65L62 52L54 49L50 53L46 58L38 61L36 66L33 67L32 63L35 59L43 56L46 49Z"/>
</g>
</g>
</svg></div>

<div id="count">Showing 12 of 12 media items</div>
<div id="ft1">Thank you for creating with <u>WordPress</u>.</div>
<div id="ft2">Version 6.9.4</div>
</div>
</body>
</html>
